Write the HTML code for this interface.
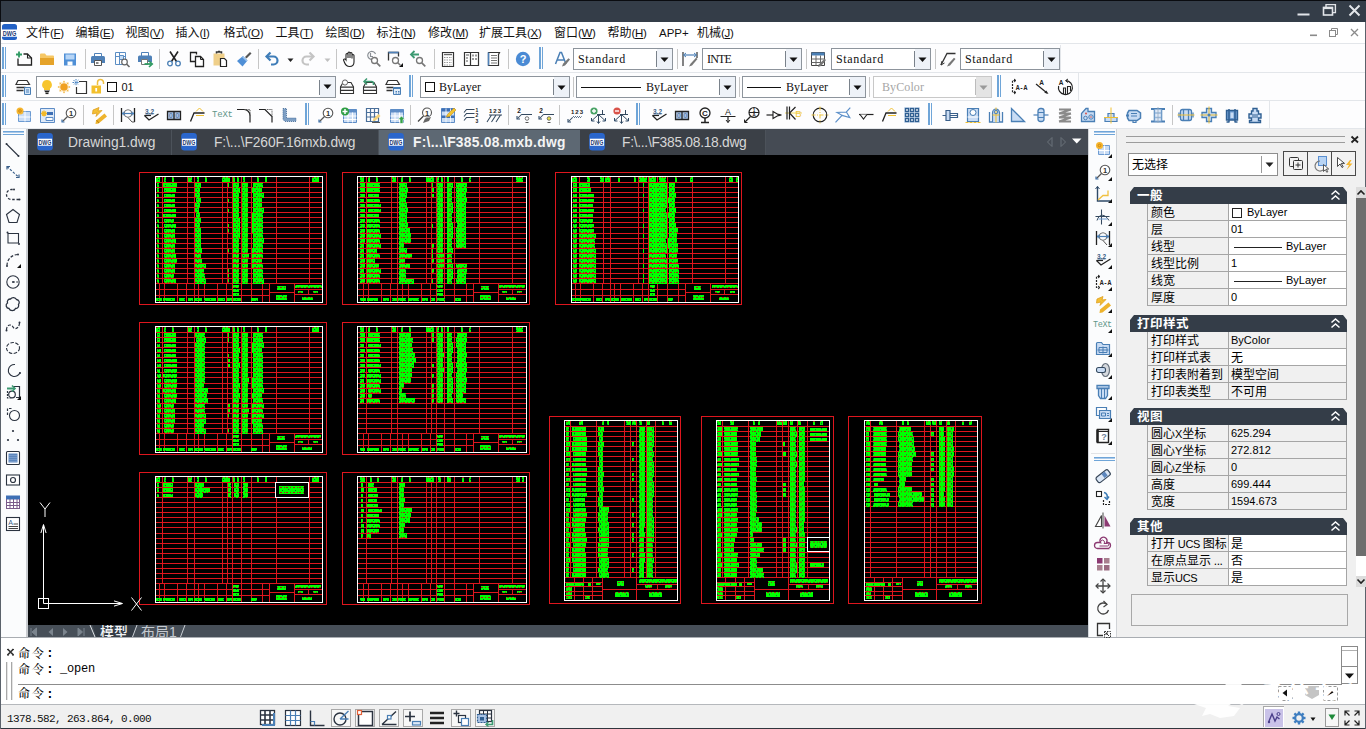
<!DOCTYPE html><html lang="zh"><head><meta charset="utf-8"><title>CAD</title><style>
*{box-sizing:border-box;margin:0;padding:0}
html,body{width:1366px;height:729px;overflow:hidden;background:#fff}
body{position:relative;font-family:"Liberation Sans","Noto Sans CJK SC",sans-serif;font-size:12px;color:#000}
.a{position:absolute}
.t{position:absolute;white-space:nowrap;line-height:1}
.mono{font-family:"Liberation Mono","Noto Sans CJK SC",monospace}
.serif{font-family:"Liberation Serif","Noto Serif CJK SC",serif}
svg{position:absolute;overflow:visible}
</style></head><body>
<div class="a" style="left:0px;top:0px;width:1366px;height:22px;background:#343d48;"></div>
<div class="a" style="left:0px;top:0px;width:1366px;height:1px;background:#0a0c10;"></div>
<div class="a" style="left:0px;top:0px;width:1px;height:22px;background:#0a0c10;"></div>
<div class="a" style="left:0px;top:22px;width:1366px;height:22px;background:#ffffff;"></div>
<div class="a" style="left:0px;top:44px;width:1366px;height:85px;background:#fdfdfe;"></div>
<div class="a" style="left:0px;top:43px;width:1366px;height:1px;background:#e3e6ea;"></div>
<div class="a" style="left:0px;top:72px;width:1366px;height:1px;background:#e3e6ea;"></div>
<div class="a" style="left:0px;top:100px;width:1366px;height:1px;background:#e3e6ea;"></div>
<div class="a" style="left:0px;top:128px;width:1366px;height:1px;background:#e3e6ea;"></div>
<div class="a" style="left:0px;top:129px;width:28px;height:509px;background:#fbfcfd;"></div>
<div class="a" style="left:26px;top:129px;width:2px;height:509px;background:#c9ccd0;"></div>
<div class="a" style="left:28px;top:129px;width:1061px;height:26px;background:#454b54;"></div>
<div class="a" style="left:28px;top:154.5px;width:1061px;height:1px;background:#8a8f95;"></div>
<div class="a" style="left:28px;top:155px;width:1060px;height:470px;background:#000;"></div>
<div class="a" style="left:28px;top:625px;width:1060px;height:12px;background:#474f58;"></div>
<div class="a" style="left:1089px;top:129px;width:28px;height:509px;background:#fbfcfd;"></div>
<div class="a" style="left:1088px;top:129px;width:1px;height:509px;background:#d5d8dc;"></div>
<div class="a" style="left:1117px;top:129px;width:249px;height:509px;background:#f0f0f0;"></div>
<div class="a" style="left:1116px;top:129px;width:1px;height:509px;background:#d0d3d7;"></div>
<div class="a" style="left:0px;top:637px;width:1366px;height:1px;background:#a9adb2;"></div>
<div class="a" style="left:0px;top:638px;width:1366px;height:67px;background:#ffffff;"></div>
<div class="a" style="left:0px;top:704px;width:1366px;height:1px;background:#b5b8bc;"></div>
<div class="a" style="left:0px;top:705px;width:1366px;height:24px;background:#f0f0f0;"></div>
<div class="a" style="left:0px;top:727.5px;width:1366px;height:1.5px;background:#30363e;"></div>
<div class="a" style="left:0px;top:22px;width:1px;height:707px;background:#5b626b;"></div>
<div class="a" style="left:1365px;top:22px;width:1px;height:707px;background:#5b626b;"></div>
<svg style="left:1290px;top:2px" width="76" height="20" viewBox="0 0 76 20">
<rect x="7.5" y="11.5" width="12" height="2" fill="#e2e5e9"/>
<rect x="33.5" y="5.500" width="9" height="7.500" fill="none" stroke="#e2e5e9" stroke-width="1.600"/><path d="M33 6h10" stroke="#e2e5e9" stroke-width="2.200"/>
<path d="M36 5V2.6h9.4v8H42.5" fill="none" stroke="#e2e5e9" stroke-width="1.4"/>
<path d="M59.5 3.5l10 10M69.5 3.5l-10 10" stroke="#e2e5e9" stroke-width="2"/>
</svg>
<svg style="left:1300px;top:24px" width="66" height="18" viewBox="0 0 66 18">
<rect x="10" y="10.5" width="7" height="1.6" fill="#8a8a8a"/>
<rect x="29.5" y="6.5" width="6" height="6" fill="none" stroke="#8a8a8a" stroke-width="1"/>
<path d="M31.5 6.5V4.5h6v6h-2" fill="none" stroke="#8a8a8a" stroke-width="1"/>
<path d="M51 5l7 7M58 5l-7 7" stroke="#8a8a8a" stroke-width="1.3"/>
</svg>
<svg style="left:2px;top:24px" width="15" height="16" viewBox="0 0 15 16">
<path d="M0 5.500V2.500A2.500 2.500 0 0 1 2.500 0h10A2.500 2.500 0 0 1 15 2.500v3z" fill="#2362c6"/>
<path d="M0 12.800h15v.7A2.500 2.500 0 0 1 12.500 16h-10A2.500 2.500 0 0 1 0 13.500z" fill="#2362c6"/>
<text x="7.500" y="11.800" font-family="Liberation Sans,sans-serif" font-size="7.400" font-weight="700" fill="#1b3770" text-anchor="middle" textLength="13.500" lengthAdjust="spacingAndGlyphs">DWG</text>
</svg>
<div class="t " style="left:26px;top:27px;font-size:12px;color:#111;">文件<span style="font-size:11.5px;letter-spacing:-0.3px">(<u>F</u>)</span></div>
<div class="t " style="left:75.5px;top:27px;font-size:12px;color:#111;">编辑<span style="font-size:11.5px;letter-spacing:-0.3px">(<u>E</u>)</span></div>
<div class="t " style="left:125.5px;top:27px;font-size:12px;color:#111;">视图<span style="font-size:11.5px;letter-spacing:-0.3px">(<u>V</u>)</span></div>
<div class="t " style="left:175.5px;top:27px;font-size:12px;color:#111;">插入<span style="font-size:11.5px;letter-spacing:-0.3px">(<u>I</u>)</span></div>
<div class="t " style="left:223.5px;top:27px;font-size:12px;color:#111;">格式<span style="font-size:11.5px;letter-spacing:-0.3px">(<u>O</u>)</span></div>
<div class="t " style="left:275.5px;top:27px;font-size:12px;color:#111;">工具<span style="font-size:11.5px;letter-spacing:-0.3px">(<u>T</u>)</span></div>
<div class="t " style="left:325.5px;top:27px;font-size:12px;color:#111;">绘图<span style="font-size:11.5px;letter-spacing:-0.3px">(<u>D</u>)</span></div>
<div class="t " style="left:376.5px;top:27px;font-size:12px;color:#111;">标注<span style="font-size:11.5px;letter-spacing:-0.3px">(<u>N</u>)</span></div>
<div class="t " style="left:428px;top:27px;font-size:12px;color:#111;">修改<span style="font-size:11.5px;letter-spacing:-0.3px">(<u>M</u>)</span></div>
<div class="t " style="left:479px;top:27px;font-size:12px;color:#111;">扩展工具<span style="font-size:11.5px;letter-spacing:-0.3px">(<u>X</u>)</span></div>
<div class="t " style="left:554px;top:27px;font-size:12px;color:#111;">窗口<span style="font-size:11.5px;letter-spacing:-0.3px">(<u>W</u>)</span></div>
<div class="t " style="left:607.5px;top:27px;font-size:12px;color:#111;">帮助<span style="font-size:11.5px;letter-spacing:-0.3px">(<u>H</u>)</span></div>
<div class="t " style="left:659px;top:27.5px;font-size:11.5px;color:#111;">APP+</div>
<div class="t " style="left:697px;top:27px;font-size:12px;color:#111;">机械<span style="font-size:11.5px;letter-spacing:-0.3px">(<u>J</u>)</span></div>
<div class="a" style="left:28px;top:130px;width:144px;height:25px;background:#3b4047;"></div>
<div class="a" style="left:171px;top:130px;width:1px;height:25px;background:#4c525a;"></div>
<svg style="left:37px;top:132.5px" width="16" height="17.5" viewBox="0 0 17 19">
<rect x="0" y="0" width="17" height="19" rx="3.500" fill="#2a66cc"/>
<rect x="0.800" y="6.200" width="15.400" height="7.600" fill="#fff"/>
<text x="8.500" y="12.900" font-family="Liberation Sans,sans-serif" font-size="7.600" font-weight="700" fill="#1b3770" text-anchor="middle" textLength="14" lengthAdjust="spacingAndGlyphs">DWG</text>
</svg>
<div class="t " style="left:68px;top:136px;font-size:13.8px;color:#d6d6d6;font-weight:400;letter-spacing:0px">Drawing1.dwg</div>
<div class="a" style="left:172px;top:130px;width:207px;height:25px;background:#3b4047;"></div>
<div class="a" style="left:378px;top:130px;width:1px;height:25px;background:#4c525a;"></div>
<svg style="left:181px;top:132.5px" width="16" height="17.5" viewBox="0 0 17 19">
<rect x="0" y="0" width="17" height="19" rx="3.500" fill="#2a66cc"/>
<rect x="0.800" y="6.200" width="15.400" height="7.600" fill="#fff"/>
<text x="8.500" y="12.900" font-family="Liberation Sans,sans-serif" font-size="7.600" font-weight="700" fill="#1b3770" text-anchor="middle" textLength="14" lengthAdjust="spacingAndGlyphs">DWG</text>
</svg>
<div class="t " style="left:214px;top:136px;font-size:13.8px;color:#d6d6d6;font-weight:400;letter-spacing:-0.13px">F:\...\F260F.16mxb.dwg</div>
<div class="a" style="left:379px;top:130px;width:201px;height:25px;background:#5d6873;"></div>
<svg style="left:388px;top:132.5px" width="16" height="17.5" viewBox="0 0 17 19">
<rect x="0" y="0" width="17" height="19" rx="3.500" fill="#2a66cc"/>
<rect x="0.800" y="6.200" width="15.400" height="7.600" fill="#fff"/>
<text x="8.500" y="12.900" font-family="Liberation Sans,sans-serif" font-size="7.600" font-weight="700" fill="#1b3770" text-anchor="middle" textLength="14" lengthAdjust="spacingAndGlyphs">DWG</text>
</svg>
<div class="t " style="left:413px;top:136px;font-size:13.8px;color:#f4f4f4;font-weight:700;letter-spacing:0.28px">F:\...\F385.08.mxb.dwg</div>
<div class="a" style="left:580px;top:130px;width:186px;height:25px;background:#3b4047;"></div>
<div class="a" style="left:765px;top:130px;width:1px;height:25px;background:#4c525a;"></div>
<svg style="left:589px;top:132.5px" width="16" height="17.5" viewBox="0 0 17 19">
<rect x="0" y="0" width="17" height="19" rx="3.500" fill="#2a66cc"/>
<rect x="0.800" y="6.200" width="15.400" height="7.600" fill="#fff"/>
<text x="8.500" y="12.900" font-family="Liberation Sans,sans-serif" font-size="7.600" font-weight="700" fill="#1b3770" text-anchor="middle" textLength="14" lengthAdjust="spacingAndGlyphs">DWG</text>
</svg>
<div class="t " style="left:622px;top:136px;font-size:13.8px;color:#d6d6d6;font-weight:400;letter-spacing:-0.28px">F:\...\F385.08.18.dwg</div>
<svg style="left:1040px;top:134px" width="48" height="16" viewBox="0 0 48 16">
<path d="M12 3.5L7.5 8 12 12.5z" fill="none" stroke="#6b727a" stroke-width="1"/>
<path d="M21 3.5L25.5 8 21 12.5z" fill="none" stroke="#6b727a" stroke-width="1"/>
<path d="M32 4.5h9.5L36.75 9.6z" fill="#fff"/>
</svg>
<svg style="left:0;top:0" width="1366" height="729" viewBox="0 0 1366 729" shape-rendering="crispEdges"><path d="M162.5 176.5V283.5M187.5 176.5V283.5M194.5 176.5V283.5M222.5 176.5V283.5M227.5 176.5V283.5M232.5 176.5V283.5M241.5 176.5V283.5M251.5 176.5V283.5M276.5 176.5V283.5M309.5 176.5V283.5M155.5 182.5H322.5M155.5 187.5H322.5M155.5 192.5H322.5M155.5 197.5H322.5M155.5 202.5H322.5M155.5 207.5H322.5M155.5 212.5H322.5M155.5 217.5H322.5M155.5 222.5H322.5M155.5 227.5H322.5M155.5 233.5H322.5M155.5 238.5H322.5M155.5 243.5H322.5M155.5 248.5H322.5M155.5 253.5H322.5M155.5 258.5H322.5M155.5 263.5H322.5M155.5 268.5H322.5M155.5 273.5H322.5M155.5 278.5H322.5M155.5 283.5H322.5M159.5 283.5V302.5M164.5 283.5V302.5M177.5 283.5V302.5M186.5 283.5V302.5M194.5 283.5V302.5M198.5 283.5V302.5M204.5 283.5V302.5M217.5 283.5V302.5M226.5 283.5V302.5M232.5 283.5V302.5M241.5 283.5V302.5M251.5 283.5V302.5M262.5 283.5V302.5M155.5 289.5H269.5M155.5 295.5H269.5M269.5 283.5V302.5M294.5 283.5V302.5M269.5 292.5H294.5M294.5 289.5H322.5M294.5 294.5H322.5M308.5 289.5V294.5M366.5 176.5V283.5M391.5 176.5V283.5M397.5 176.5V283.5M426.5 176.5V283.5M431.5 176.5V283.5M436.5 176.5V283.5M444.5 176.5V283.5M454.5 176.5V283.5M479.5 176.5V283.5M512.5 176.5V283.5M357.5 182.5H526.5M357.5 187.5H526.5M357.5 192.5H526.5M357.5 197.5H526.5M357.5 202.5H526.5M357.5 207.5H526.5M357.5 212.5H526.5M357.5 217.5H526.5M357.5 222.5H526.5M357.5 227.5H526.5M357.5 233.5H526.5M357.5 238.5H526.5M357.5 243.5H526.5M357.5 248.5H526.5M357.5 253.5H526.5M357.5 258.5H526.5M357.5 263.5H526.5M357.5 268.5H526.5M357.5 273.5H526.5M357.5 278.5H526.5M357.5 283.5H526.5M363.5 283.5V302.5M368.5 283.5V302.5M381.5 283.5V302.5M390.5 283.5V302.5M397.5 283.5V302.5M402.5 283.5V302.5M408.5 283.5V302.5M421.5 283.5V302.5M430.5 283.5V302.5M436.5 283.5V302.5M444.5 283.5V302.5M454.5 283.5V302.5M466.5 283.5V302.5M357.5 289.5H473.5M357.5 295.5H473.5M473.5 283.5V302.5M498.5 283.5V302.5M473.5 292.5H498.5M498.5 289.5H526.5M498.5 294.5H526.5M512.5 289.5V294.5M579.5 176.5V283.5M603.5 176.5V283.5M610.5 176.5V283.5M638.5 176.5V283.5M643.5 176.5V283.5M648.5 176.5V283.5M657.5 176.5V283.5M667.5 176.5V283.5M692.5 176.5V283.5M725.5 176.5V283.5M571.5 182.5H738.5M571.5 187.5H738.5M571.5 192.5H738.5M571.5 197.5H738.5M571.5 202.5H738.5M571.5 207.5H738.5M571.5 212.5H738.5M571.5 217.5H738.5M571.5 222.5H738.5M571.5 227.5H738.5M571.5 233.5H738.5M571.5 238.5H738.5M571.5 243.5H738.5M571.5 248.5H738.5M571.5 253.5H738.5M571.5 258.5H738.5M571.5 263.5H738.5M571.5 268.5H738.5M571.5 273.5H738.5M571.5 278.5H738.5M571.5 283.5H738.5M575.5 283.5V302.5M580.5 283.5V302.5M593.5 283.5V302.5M602.5 283.5V302.5M610.5 283.5V302.5M614.5 283.5V302.5M620.5 283.5V302.5M633.5 283.5V302.5M642.5 283.5V302.5M648.5 283.5V302.5M657.5 283.5V302.5M667.5 283.5V302.5M678.5 283.5V302.5M571.5 289.5H685.5M571.5 295.5H685.5M685.5 283.5V302.5M710.5 283.5V302.5M685.5 292.5H710.5M710.5 289.5H738.5M710.5 294.5H738.5M724.5 289.5V294.5M162.5 326.5V433.5M187.5 326.5V433.5M194.5 326.5V433.5M222.5 326.5V433.5M227.5 326.5V433.5M232.5 326.5V433.5M241.5 326.5V433.5M251.5 326.5V433.5M276.5 326.5V433.5M309.5 326.5V433.5M155.5 332.5H322.5M155.5 337.5H322.5M155.5 342.5H322.5M155.5 347.5H322.5M155.5 352.5H322.5M155.5 357.5H322.5M155.5 362.5H322.5M155.5 367.5H322.5M155.5 372.5H322.5M155.5 377.5H322.5M155.5 383.5H322.5M155.5 388.5H322.5M155.5 393.5H322.5M155.5 398.5H322.5M155.5 403.5H322.5M155.5 408.5H322.5M155.5 413.5H322.5M155.5 418.5H322.5M155.5 423.5H322.5M155.5 428.5H322.5M155.5 433.5H322.5M159.5 433.5V452.5M164.5 433.5V452.5M177.5 433.5V452.5M186.5 433.5V452.5M194.5 433.5V452.5M198.5 433.5V452.5M204.5 433.5V452.5M217.5 433.5V452.5M226.5 433.5V452.5M232.5 433.5V452.5M241.5 433.5V452.5M251.5 433.5V452.5M262.5 433.5V452.5M155.5 439.5H269.5M155.5 445.5H269.5M269.5 433.5V452.5M294.5 433.5V452.5M269.5 442.5H294.5M294.5 439.5H322.5M294.5 444.5H322.5M308.5 439.5V444.5M366.5 326.5V433.5M391.5 326.5V433.5M397.5 326.5V433.5M426.5 326.5V433.5M431.5 326.5V433.5M436.5 326.5V433.5M444.5 326.5V433.5M454.5 326.5V433.5M479.5 326.5V433.5M512.5 326.5V433.5M357.5 332.5H526.5M357.5 337.5H526.5M357.5 342.5H526.5M357.5 347.5H526.5M357.5 352.5H526.5M357.5 357.5H526.5M357.5 362.5H526.5M357.5 367.5H526.5M357.5 372.5H526.5M357.5 377.5H526.5M357.5 383.5H526.5M357.5 388.5H526.5M357.5 393.5H526.5M357.5 398.5H526.5M357.5 403.5H526.5M357.5 408.5H526.5M357.5 413.5H526.5M357.5 418.5H526.5M357.5 423.5H526.5M357.5 428.5H526.5M357.5 433.5H526.5M363.5 433.5V452.5M368.5 433.5V452.5M381.5 433.5V452.5M390.5 433.5V452.5M397.5 433.5V452.5M402.5 433.5V452.5M408.5 433.5V452.5M421.5 433.5V452.5M430.5 433.5V452.5M436.5 433.5V452.5M444.5 433.5V452.5M454.5 433.5V452.5M466.5 433.5V452.5M357.5 439.5H473.5M357.5 445.5H473.5M473.5 433.5V452.5M498.5 433.5V452.5M473.5 442.5H498.5M498.5 439.5H526.5M498.5 444.5H526.5M512.5 439.5V444.5M162.5 476.5V583.5M187.5 476.5V583.5M194.5 476.5V583.5M222.5 476.5V583.5M227.5 476.5V583.5M232.5 476.5V583.5M241.5 476.5V583.5M251.5 476.5V583.5M276.5 476.5V583.5M309.5 476.5V583.5M155.5 482.5H322.5M155.5 487.5H322.5M155.5 492.5H322.5M155.5 497.5H322.5M155.5 502.5H322.5M155.5 507.5H322.5M155.5 512.5H322.5M155.5 517.5H322.5M155.5 522.5H322.5M155.5 527.5H322.5M155.5 533.5H322.5M155.5 538.5H322.5M155.5 543.5H322.5M155.5 548.5H322.5M155.5 553.5H322.5M155.5 558.5H322.5M155.5 563.5H322.5M155.5 568.5H322.5M155.5 573.5H322.5M155.5 578.5H322.5M155.5 583.5H322.5M159.5 583.5V602.5M164.5 583.5V602.5M177.5 583.5V602.5M186.5 583.5V602.5M194.5 583.5V602.5M198.5 583.5V602.5M204.5 583.5V602.5M217.5 583.5V602.5M226.5 583.5V602.5M232.5 583.5V602.5M241.5 583.5V602.5M251.5 583.5V602.5M262.5 583.5V602.5M155.5 589.5H269.5M155.5 595.5H269.5M269.5 583.5V602.5M294.5 583.5V602.5M269.5 592.5H294.5M294.5 589.5H322.5M294.5 594.5H322.5M308.5 589.5V594.5M366.5 476.5V583.5M391.5 476.5V583.5M397.5 476.5V583.5M426.5 476.5V583.5M431.5 476.5V583.5M436.5 476.5V583.5M444.5 476.5V583.5M454.5 476.5V583.5M479.5 476.5V583.5M512.5 476.5V583.5M357.5 482.5H526.5M357.5 487.5H526.5M357.5 492.5H526.5M357.5 497.5H526.5M357.5 502.5H526.5M357.5 507.5H526.5M357.5 512.5H526.5M357.5 517.5H526.5M357.5 522.5H526.5M357.5 527.5H526.5M357.5 533.5H526.5M357.5 538.5H526.5M357.5 543.5H526.5M357.5 548.5H526.5M357.5 553.5H526.5M357.5 558.5H526.5M357.5 563.5H526.5M357.5 568.5H526.5M357.5 573.5H526.5M357.5 578.5H526.5M357.5 583.5H526.5M363.5 583.5V602.5M368.5 583.5V602.5M381.5 583.5V602.5M390.5 583.5V602.5M397.5 583.5V602.5M402.5 583.5V602.5M408.5 583.5V602.5M421.5 583.5V602.5M430.5 583.5V602.5M436.5 583.5V602.5M444.5 583.5V602.5M454.5 583.5V602.5M466.5 583.5V602.5M357.5 589.5H473.5M357.5 595.5H473.5M473.5 583.5V602.5M498.5 583.5V602.5M473.5 592.5H498.5M498.5 589.5H526.5M498.5 594.5H526.5M512.5 589.5V594.5M570.5 420.5V577.5M596.5 420.5V577.5M624.5 420.5V577.5M630.5 420.5V577.5M636.5 420.5V577.5M646.5 420.5V577.5M655.5 420.5V577.5M564.5 426.5H677.5M564.5 431.5H677.5M564.5 436.5H677.5M564.5 441.5H677.5M564.5 446.5H677.5M564.5 451.5H677.5M564.5 456.5H677.5M564.5 461.5H677.5M564.5 466.5H677.5M564.5 471.5H677.5M564.5 476.5H677.5M564.5 481.5H677.5M564.5 486.5H677.5M564.5 491.5H677.5M564.5 496.5H677.5M564.5 501.5H677.5M564.5 506.5H677.5M564.5 512.5H677.5M564.5 517.5H677.5M564.5 522.5H677.5M564.5 527.5H677.5M564.5 532.5H677.5M564.5 537.5H677.5M564.5 542.5H677.5M564.5 547.5H677.5M564.5 552.5H677.5M564.5 557.5H677.5M564.5 562.5H677.5M564.5 567.5H677.5M564.5 572.5H677.5M564.5 577.5H677.5M574.5 577.5V600.5M583.5 577.5V600.5M592.5 577.5V600.5M564.5 586.5H602.5M564.5 591.5H602.5M564.5 595.5H602.5M564.5 582.5H602.5M602.5 577.5V600.5M636.5 577.5V600.5M602.5 589.5H677.5M636.5 584.5H677.5M657.5 584.5V589.5M722.5 420.5V577.5M748.5 420.5V577.5M776.5 420.5V577.5M782.5 420.5V577.5M788.5 420.5V577.5M797.5 420.5V577.5M807.5 420.5V577.5M716.5 426.5H829.5M716.5 431.5H829.5M716.5 436.5H829.5M716.5 441.5H829.5M716.5 446.5H829.5M716.5 451.5H829.5M716.5 456.5H829.5M716.5 461.5H829.5M716.5 466.5H829.5M716.5 471.5H829.5M716.5 476.5H829.5M716.5 481.5H829.5M716.5 486.5H829.5M716.5 491.5H829.5M716.5 496.5H829.5M716.5 501.5H829.5M716.5 506.5H829.5M716.5 512.5H829.5M716.5 517.5H829.5M716.5 522.5H829.5M716.5 527.5H829.5M716.5 532.5H829.5M716.5 537.5H829.5M716.5 542.5H829.5M716.5 547.5H829.5M716.5 552.5H829.5M716.5 557.5H829.5M716.5 562.5H829.5M716.5 567.5H829.5M716.5 572.5H829.5M716.5 577.5H829.5M725.5 577.5V600.5M735.5 577.5V600.5M744.5 577.5V600.5M716.5 586.5H754.5M716.5 591.5H754.5M716.5 595.5H754.5M716.5 582.5H754.5M754.5 577.5V600.5M788.5 577.5V600.5M754.5 589.5H829.5M788.5 584.5H829.5M808.5 584.5V589.5M870.5 420.5V577.5M896.5 420.5V577.5M924.5 420.5V577.5M930.5 420.5V577.5M936.5 420.5V577.5M946.5 420.5V577.5M955.5 420.5V577.5M864.5 426.5H977.5M864.5 431.5H977.5M864.5 436.5H977.5M864.5 441.5H977.5M864.5 446.5H977.5M864.5 451.5H977.5M864.5 456.5H977.5M864.5 461.5H977.5M864.5 466.5H977.5M864.5 471.5H977.5M864.5 476.5H977.5M864.5 481.5H977.5M864.5 486.5H977.5M864.5 491.5H977.5M864.5 496.5H977.5M864.5 501.5H977.5M864.5 506.5H977.5M864.5 512.5H977.5M864.5 517.5H977.5M864.5 522.5H977.5M864.5 527.5H977.5M864.5 532.5H977.5M864.5 537.5H977.5M864.5 542.5H977.5M864.5 547.5H977.5M864.5 552.5H977.5M864.5 557.5H977.5M864.5 562.5H977.5M864.5 567.5H977.5M864.5 572.5H977.5M864.5 577.5H977.5M874.5 577.5V600.5M883.5 577.5V600.5M892.5 577.5V600.5M864.5 586.5H902.5M864.5 591.5H902.5M864.5 595.5H902.5M864.5 582.5H902.5M902.5 577.5V600.5M936.5 577.5V600.5M902.5 589.5H977.5M936.5 584.5H977.5M957.5 584.5V589.5" stroke="#de161e" stroke-width="1" fill="none"/><path d="M275.7 482.7h32.6v14.5h-32.6zM807.4 537.6h22.4v14.2h-22.4z" fill="#000"/><defs><pattern id="tx" width="13" height="5" shape-rendering="crispEdges" patternUnits="userSpaceOnUse" patternTransform="translate(0,182)"><g id="txc"><path d="M0 0h2v1h-2zM4 0h1v1h-1zM7 0h2v1h-2zM11 0h1v1h-1z" fill="#b01818"/><path d="M2 2h1v1h-1zM9 3h1v1h-1z" fill="#063"/></g></pattern><pattern id="tx2" width="13" height="5.03" patternUnits="userSpaceOnUse" patternTransform="translate(0,426)"><use href="#txc"/></pattern><path id="gp" d="M156.6 183.4h2.3v3.8h-2.3zM156.6 188.4h2.1v3.8h-2.1zM156.6 193.5h2.5v3.8h-2.5zM156.6 198.5h2.1v3.8h-2.1zM156.6 203.6h2.4v3.8h-2.4zM156.6 208.6h2.3v3.8h-2.3zM156.6 213.6h2v3.8h-2zM156.6 218.7h2.4v3.8h-2.4zM156.6 223.7h2v3.8h-2zM156.6 228.8h2.3v3.8h-2.3zM156.6 233.8h2.1v3.8h-2.1zM156.6 238.8h2.1v3.8h-2.1zM156.6 243.9h2.3v3.8h-2.3zM156.6 248.9h2.7v3.8h-2.7zM156.6 254h2.1v3.8h-2.1zM156.6 259h2.2v3.8h-2.2zM156.6 264h2.5v3.8h-2.5zM156.6 269.1h2.8v3.8h-2.8zM156.6 274.1h2.5v3.8h-2.5zM156.6 279.2h2.3v3.8h-2.3zM163.4 183.4h13.1v3.8h-13.1zM163.6 188.4h12.7v3.8h-12.7zM163.5 193.5h11.1v3.8h-11.1zM163.9 198.5h11.1v3.8h-11.1zM163.7 203.6h10.9v3.8h-10.9zM163.6 208.6h12.1v3.8h-12.1zM163.4 213.6h12.1v3.8h-12.1zM163.5 218.7h10.8v3.8h-10.8zM163.7 223.7h12.2v3.8h-12.2zM163.8 228.8h11.2v3.8h-11.2zM163.6 233.8h11.7v3.8h-11.7zM163.8 238.8h12.3v3.8h-12.3zM163.7 243.9h11v3.8h-11zM163.9 248.9h11.5v3.8h-11.5zM163.6 254h12.4v3.8h-12.4zM163.5 259h13.1v3.8h-13.1zM163.9 264h11.3v3.8h-11.3zM163.7 269.1h10.9v3.8h-10.9zM163.8 274.1h10.5v3.8h-10.5zM163.7 279.2h12.3v3.8h-12.3zM195.1 182.9h5.6v4.9h-5.6zM195.3 187.9h5v4.9h-5zM195.2 193h4.9v4.9h-4.9zM195.5 198h5.1v4.9h-5.1zM195.3 203.1h4.5v4.9h-4.5zM195.3 208.1h3.7v4.9h-3.7zM195.5 213.1h4.7v4.9h-4.7zM195.1 218.2h5.5v4.9h-5.5zM195.3 223.2h4.4v4.9h-4.4zM195.2 228.3h5.8v4.9h-5.8zM195 233.3h6.3v4.9h-6.3zM195.4 238.3h5.7v4.9h-5.7zM195 243.4h6.1v4.9h-6.1zM195.4 248.4h6.3v4.9h-6.3zM195.2 253.5h5.9v4.9h-5.9zM195.4 258.5h6.6v4.9h-6.6zM195.4 263.5h10.1v4.9h-10.1zM195.1 268.6h9.3v4.9h-9.3zM195.4 273.6h9.2v4.9h-9.2zM195 278.7h10.8v4.9h-10.8zM228 183.4h1.3v3.8h-1.3zM228 198.5h1.3v3.8h-1.3zM228 208.6h1.3v3.8h-1.3zM228 223.7h1.4v3.8h-1.4zM228 228.8h1.4v3.8h-1.4zM228 248.9h1.3v3.8h-1.3zM228 269.1h1.2v3.8h-1.2zM228 274.1h1.4v3.8h-1.4zM228 279.2h1.3v3.8h-1.3zM233.2 182.9h6.1v4.9h-6.1zM233.2 187.9h6.5v4.9h-6.5zM233.2 193h6.2v4.9h-6.2zM233.2 198h6v4.9h-6zM233.2 203.1h6.1v4.9h-6.1zM233.2 208.1h6.2v4.9h-6.2zM233.2 213.1h5.6v4.9h-5.6zM233.2 218.2h6.4v4.9h-6.4zM233.2 223.2h6.3v4.9h-6.3zM233.2 228.3h6.4v4.9h-6.4zM233.2 233.3h6.3v4.9h-6.3zM233.2 238.3h5.9v4.9h-5.9zM233.2 243.4h5.9v4.9h-5.9zM233.2 248.4h5.6v4.9h-5.6zM233.2 253.5h6.1v4.9h-6.1zM233.2 258.5h5.6v4.9h-5.6zM233.2 263.5h5.6v4.9h-5.6zM233.2 268.6h5.7v4.9h-5.7zM233.2 273.6h5.7v4.9h-5.7zM233.2 278.7h5.8v4.9h-5.8zM242.4 182.9h5.2v4.9h-5.2zM242.4 187.9h5.1v4.9h-5.1zM242.4 193h5.3v4.9h-5.3zM242.4 198h5.2v4.9h-5.2zM242.4 203.1h5.5v4.9h-5.5zM242.4 208.1h5.1v4.9h-5.1zM242.4 213.1h6v4.9h-6zM242.4 218.2h5.7v4.9h-5.7zM242.4 223.2h5.2v4.9h-5.2zM242.4 228.3h5.4v4.9h-5.4zM242.4 233.3h5.4v4.9h-5.4zM242.4 238.3h5.5v4.9h-5.5zM242.4 243.4h5.2v4.9h-5.2zM242.4 248.4h5.9v4.9h-5.9zM242.4 253.5h6.1v4.9h-6.1zM242.4 258.5h5.6v4.9h-5.6zM242.4 263.5h5.6v4.9h-5.6zM242.4 268.6h5.2v4.9h-5.2zM242.4 273.6h5.2v4.9h-5.2zM242.4 278.7h5.4v4.9h-5.4zM252.7 182.9h9.9v4.9h-9.9zM252.2 187.9h10.2v4.9h-10.2zM252.5 193h11v4.9h-11zM252.5 198h9.9v4.9h-9.9zM252.5 203.1h9.7v4.9h-9.7zM252.7 208.1h10.9v4.9h-10.9zM252.4 213.1h10.8v4.9h-10.8zM252.3 218.2h10.4v4.9h-10.4zM252.5 223.2h10.8v4.9h-10.8zM252.4 228.3h10.9v4.9h-10.9zM252.7 233.3h9.8v4.9h-9.8zM252.7 238.3h10.9v4.9h-10.9zM252.7 243.4h10.6v4.9h-10.6zM252.3 248.4h10.9v4.9h-10.9zM252.4 253.5h10.5v4.9h-10.5zM252.2 258.5h10v4.9h-10zM252.4 263.5h10.2v4.9h-10.2zM252.8 268.6h10.4v4.9h-10.4zM252.8 273.6h10.1v4.9h-10.1zM252.8 278.7h10.8v4.9h-10.8zM156.4 177.1h4v4.6h-4zM164.4 177.1h2v4.6h-2zM172.4 177.1h2v4.6h-2zM188.4 177.1h4v4.6h-4zM197.4 177.1h2v4.6h-2zM205.4 177.1h2v4.6h-2zM222.4 177.1h8v4.6h-8zM233.4 177.1h2v4.6h-2zM237.4 177.1h2v4.6h-2zM243.4 177.1h2v4.6h-2zM257.4 177.1h2v4.6h-2zM265.4 177.1h2v4.6h-2zM312.4 177.1h7v4.6h-7zM155.9 297.8h5.9v3.4h-5.9zM162.9 297.8h11.8v3.4h-11.8zM179.4 297.8h5.8v3.4h-5.8zM188.4 297.8h4.8v3.4h-4.8zM194.4 297.8h7.8v3.4h-7.8zM204.4 297.8h11.1v3.4h-11.1zM218.4 297.8h6.2v3.4h-6.2zM227.4 297.8h4.2v3.4h-4.2zM232.9 297.8h8v3.4h-8zM251.4 297.8h6.1v3.4h-6.1zM233.4 284.6h5.5v3.2h-5.5zM233.4 288.8h5.5v3.2h-5.5zM233.4 293h5.5v3.2h-5.5zM277.4 285.9h8.2v4.5h-8.2zM276.4 294.9h10.8v5h-10.8zM295.4 284.9h26.1v3h-26.1zM298.4 290.7h5v2.6h-5zM313.4 290.7h5v2.6h-5zM302.4 296.6h10.2v3.6h-10.2zM360.2 183.4h4.6v3.8h-4.6zM360.2 188.4h4.6v3.8h-4.6zM360.2 193.5h4.4v3.8h-4.4zM360.2 198.5h4.1v3.8h-4.1zM360.2 203.6h4.6v3.8h-4.6zM360.2 208.6h4.3v3.8h-4.3zM360.2 213.6h4.6v3.8h-4.6zM360.2 218.7h4.8v3.8h-4.8zM360.2 223.7h4.3v3.8h-4.3zM360.2 228.8h4.3v3.8h-4.3zM360.2 233.8h4.8v3.8h-4.8zM360.2 238.8h4.6v3.8h-4.6zM360.2 243.9h4.1v3.8h-4.1zM360.2 248.9h4.1v3.8h-4.1zM360.2 254h4.1v3.8h-4.1zM360.2 259h4.7v3.8h-4.7zM360.2 264h4.6v3.8h-4.6zM360.2 269.1h4.1v3.8h-4.1zM360.2 274.1h4.7v3.8h-4.7zM360.2 279.2h4.8v3.8h-4.8zM367.2 183.4h13.2v3.8h-13.2zM367.1 188.4h13v3.8h-13zM367.6 193.5h11.3v3.8h-11.3zM367.3 198.5h13v3.8h-13zM367.3 203.6h13.8v3.8h-13.8zM367.5 208.6h13.4v3.8h-13.4zM367.2 213.6h12.2v3.8h-12.2zM367.1 218.7h12.4v3.8h-12.4zM367.2 223.7h13.1v3.8h-13.1zM367.1 228.8h12.7v3.8h-12.7zM367.2 233.8h13.8v3.8h-13.8zM367.4 238.8h12.5v3.8h-12.5zM367.3 243.9h13.7v3.8h-13.7zM367.3 248.9h9.7v3.8h-9.7zM367.3 254h12.8v3.8h-12.8zM367.3 259h7.6v3.8h-7.6zM367 264h12.2v3.8h-12.2zM367.1 269.1h13.6v3.8h-13.6zM367.4 274.1h12.5v3.8h-12.5zM367.2 279.2h12.9v3.8h-12.9zM398.8 182.9h8.2v4.9h-8.2zM398.6 187.9h9.2v4.9h-9.2zM398.6 193h8.5v4.9h-8.5zM399 198h7.4v4.9h-7.4zM398.8 203.1h8.2v4.9h-8.2zM399 208.1h8.7v4.9h-8.7zM398.9 213.1h8v4.9h-8zM398.8 218.2h8.2v4.9h-8.2zM398.8 223.2h8.8v4.9h-8.8zM398.8 228.3h11.3v4.9h-11.3zM398.9 233.3h12.3v4.9h-12.3zM399.1 238.3h12v4.9h-12zM398.8 243.4h5.5v4.9h-5.5zM399 248.4h8.2v4.9h-8.2zM398.6 253.5h13.4v4.9h-13.4zM398.5 258.5h6.3v4.9h-6.3zM398.5 263.5h11.7v4.9h-11.7zM399 268.6h6.5v4.9h-6.5zM398.6 273.6h7.5v4.9h-7.5zM398.9 278.7h14.7v4.9h-14.7zM431.6 183.4h1.7v3.8h-1.7zM431.6 188.4h2v3.8h-2zM431.6 193.5h2v3.8h-2zM431.6 223.7h1.7v3.8h-1.7zM431.6 243.9h2v3.8h-2zM431.6 248.9h1.8v3.8h-1.8zM431.6 254h1.8v3.8h-1.8zM431.6 259h2v3.8h-2zM431.6 269.1h1.9v3.8h-1.9zM431.6 279.2h1.7v3.8h-1.7zM437.4 182.9h5.7v4.9h-5.7zM437.4 187.9h5.8v4.9h-5.8zM437.4 193h5.6v4.9h-5.6zM437.4 198h5.5v4.9h-5.5zM437.4 203.1h5.6v4.9h-5.6zM437.4 208.1h6v4.9h-6zM437.4 213.1h5.3v4.9h-5.3zM437.4 218.2h5.9v4.9h-5.9zM437.4 223.2h5.7v4.9h-5.7zM437.4 228.3h5.3v4.9h-5.3zM437.4 233.3h5.6v4.9h-5.6zM437.4 238.3h5.9v4.9h-5.9zM437.4 243.4h5.8v4.9h-5.8zM437.4 248.4h5.4v4.9h-5.4zM437.4 253.5h6.3v4.9h-6.3zM437.4 258.5h6.1v4.9h-6.1zM437.4 263.5h6.3v4.9h-6.3zM437.4 268.6h5.4v4.9h-5.4zM437.4 273.6h5.6v4.9h-5.6zM437.4 278.7h5.3v4.9h-5.3zM446.5 182.9h6.3v4.9h-6.3zM446.5 187.9h5.8v4.9h-5.8zM446.5 193h5.6v4.9h-5.6zM446.5 198h5.9v4.9h-5.9zM446.5 203.1h6.4v4.9h-6.4zM446.5 208.1h6.3v4.9h-6.3zM446.5 213.1h5.8v4.9h-5.8zM446.5 218.2h5.6v4.9h-5.6zM446.5 223.2h6.4v4.9h-6.4zM446.5 228.3h6.1v4.9h-6.1zM446.5 233.3h6.2v4.9h-6.2zM446.5 238.3h5.6v4.9h-5.6zM446.5 243.4h5.6v4.9h-5.6zM446.5 248.4h6.2v4.9h-6.2zM446.5 253.5h5.9v4.9h-5.9zM446.5 258.5h5.6v4.9h-5.6zM446.5 263.5h6.4v4.9h-6.4zM446.5 268.6h6.1v4.9h-6.1zM446.5 273.6h6.3v4.9h-6.3zM446.5 278.7h5.6v4.9h-5.6zM456 182.9h11v4.9h-11zM456.3 187.9h10.8v4.9h-10.8zM456.3 193h9.9v4.9h-9.9zM456.2 198h11v4.9h-11zM456.3 203.1h9.6v4.9h-9.6zM456.1 208.1h10v4.9h-10zM456 213.1h9.9v4.9h-9.9zM456.2 218.2h9.8v4.9h-9.8zM456.5 223.2h9.7v4.9h-9.7zM456.3 228.3h9.9v4.9h-9.9zM456.2 233.3h9.8v4.9h-9.8zM456.2 238.3h9.6v4.9h-9.6zM456.4 243.4h9.3v4.9h-9.3zM456.1 263.5h10.5v4.9h-10.5zM456.6 268.6h9.9v4.9h-9.9zM456.5 273.6h9.4v4.9h-9.4zM456.3 278.7h10.1v4.9h-10.1zM360 177.1h4v4.6h-4zM368 177.1h2v4.6h-2zM376 177.1h2v4.6h-2zM392 177.1h4v4.6h-4zM401 177.1h2v4.6h-2zM409 177.1h2v4.6h-2zM426 177.1h8v4.6h-8zM437 177.1h2v4.6h-2zM441 177.1h2v4.6h-2zM447 177.1h2v4.6h-2zM461 177.1h2v4.6h-2zM469 177.1h2v4.6h-2zM516 177.1h7v4.6h-7zM359.5 297.8h6.2v3.4h-6.2zM366.5 297.8h11.9v3.4h-11.9zM383 297.8h6v3.4h-6zM392 297.8h5.1v3.4h-5.1zM398 297.8h8.3v3.4h-8.3zM408 297.8h10.9v3.4h-10.9zM422 297.8h6.2v3.4h-6.2zM431 297.8h4.1v3.4h-4.1zM436.5 297.8h8.1v3.4h-8.1zM455 297.8h5.9v3.4h-5.9zM437 284.6h5.5v3.2h-5.5zM437 288.8h5.5v3.2h-5.5zM437 293h5.5v3.2h-5.5zM481 285.9h7.9v4.5h-7.9zM480 294.9h10.7v5h-10.7zM499 284.9h25.8v3h-25.8zM502 290.7h5v2.6h-5zM517 290.7h5v2.6h-5zM506 296.6h9.7v3.6h-9.7zM572.5 183.4h4.6v3.8h-4.6zM572.5 188.4h4.2v3.8h-4.2zM572.5 193.5h4.1v3.8h-4.1zM572.5 198.5h4.1v3.8h-4.1zM572.5 203.6h4.7v3.8h-4.7zM572.5 208.6h4.7v3.8h-4.7zM572.5 213.6h4.5v3.8h-4.5zM572.5 218.7h4.2v3.8h-4.2zM572.5 223.7h4.2v3.8h-4.2zM572.5 228.8h4.2v3.8h-4.2zM572.5 233.8h4.4v3.8h-4.4zM572.5 238.8h4.1v3.8h-4.1zM572.5 243.9h4.4v3.8h-4.4zM572.5 248.9h4.2v3.8h-4.2zM572.5 254h4.8v3.8h-4.8zM572.5 259h4.8v3.8h-4.8zM572.5 264h4.4v3.8h-4.4zM572.5 269.1h4.2v3.8h-4.2zM572.5 274.1h4.8v3.8h-4.8zM572.5 279.2h4.2v3.8h-4.2zM578.7 183.4h11.7v3.8h-11.7zM579 188.4h11.5v3.8h-11.5zM578.8 193.5h14.9v3.8h-14.9zM578.7 198.5h15v3.8h-15zM578.8 203.6h14.5v3.8h-14.5zM578.7 208.6h14.8v3.8h-14.8zM578.9 213.6h13.9v3.8h-13.9zM579.1 218.7h14.1v3.8h-14.1zM579.2 223.7h14.6v3.8h-14.6zM579.1 228.8h14.9v3.8h-14.9zM578.9 233.8h17.5v3.8h-17.5zM579.3 238.8h16.1v3.8h-16.1zM579.1 243.9h15.9v3.8h-15.9zM578.7 248.9h17.3v3.8h-17.3zM579.2 254h17.1v3.8h-17.1zM579.1 259h16.8v3.8h-16.8zM578.8 264h17.5v3.8h-17.5zM579 269.1h16.7v3.8h-16.7zM579.2 274.1h17.2v3.8h-17.2zM579.1 279.2h17.3v3.8h-17.3zM642.7 183.4h1.6v3.8h-1.6zM642.7 193.5h1.5v3.8h-1.5zM642.7 208.6h1.5v3.8h-1.5zM642.7 223.7h1.3v3.8h-1.3zM642.7 233.8h1.2v3.8h-1.2zM642.7 248.9h1.3v3.8h-1.3zM642.7 264h1.3v3.8h-1.3zM642.7 274.1h1.2v3.8h-1.2zM642.7 279.2h1.5v3.8h-1.5zM648.7 182.9h18v4.9h-18zM648.7 187.9h18.1v4.9h-18.1zM648.7 193h18.1v4.9h-18.1zM648.7 198h18.1v4.9h-18.1zM648.7 203.1h18v4.9h-18zM648.7 208.1h17.6v4.9h-17.6zM648.7 213.1h18.2v4.9h-18.2zM648.7 218.2h18.2v4.9h-18.2zM648.7 223.2h18v4.9h-18zM648.7 228.3h18v4.9h-18zM648.7 233.3h18.1v4.9h-18.1zM648.7 238.3h17.7v4.9h-17.7zM648.7 243.4h18.2v4.9h-18.2zM648.7 248.4h17.8v4.9h-17.8zM648.7 253.5h17.7v4.9h-17.7zM648.7 258.5h17.8v4.9h-17.8zM648.7 263.5h18.2v4.9h-18.2zM648.7 268.6h17.8v4.9h-17.8zM648.7 273.6h18.2v4.9h-18.2zM648.7 278.7h18.4v4.9h-18.4zM668.5 182.9h6.7v4.9h-6.7zM668.7 187.9h6.5v4.9h-6.5zM668.7 193h7v4.9h-7zM668.3 198h7.1v4.9h-7.1zM668.5 203.1h6.2v4.9h-6.2zM668.5 208.1h7.1v4.9h-7.1zM668.3 213.1h7v4.9h-7zM668.5 218.2h6v4.9h-6zM668.7 223.2h6.8v4.9h-6.8zM668.5 228.3h9v4.9h-9zM668.6 233.3h8.6v4.9h-8.6zM668.4 238.3h8.8v4.9h-8.8zM668.4 243.4h9.4v4.9h-9.4zM668.9 248.4h9.1v4.9h-9.1zM668.6 253.5h7.9v4.9h-7.9zM668.9 258.5h8.8v4.9h-8.8zM668.5 263.5h10.7v4.9h-10.7zM668.9 268.6h9.9v4.9h-9.9zM668.6 273.6h10.1v4.9h-10.1zM668.6 278.7h10v4.9h-10zM572.2 177.1h5v4.6h-5zM586.7 177.1h3v4.6h-3zM599.7 177.1h4v4.6h-4zM604.7 177.1h5v4.6h-5zM617.7 177.1h2v4.6h-2zM633.7 177.1h2v4.6h-2zM638.7 177.1h8v4.6h-8zM648.7 177.1h7v4.6h-7zM658.7 177.1h7v4.6h-7zM674.7 177.1h2v4.6h-2zM689.7 177.1h3v4.6h-3zM728.7 177.1h4v4.6h-4zM735.7 177.1h2v4.6h-2zM572.2 297.8h6.3v3.4h-6.3zM579.2 297.8h11.8v3.4h-11.8zM595.7 297.8h6.2v3.4h-6.2zM604.7 297.8h5v3.4h-5zM610.7 297.8h8.2v3.4h-8.2zM620.7 297.8h11.1v3.4h-11.1zM634.7 297.8h5.8v3.4h-5.8zM643.7 297.8h4.2v3.4h-4.2zM649.2 297.8h8v3.4h-8zM667.7 297.8h5.7v3.4h-5.7zM649.7 284.6h5.5v3.2h-5.5zM649.7 288.8h5.5v3.2h-5.5zM649.7 293h5.5v3.2h-5.5zM693.7 285.9h7.7v4.5h-7.7zM692.7 294.9h11v5h-11zM711.7 284.9h26v3h-26zM714.7 290.7h5v2.6h-5zM729.7 290.7h5v2.6h-5zM718.7 296.6h9.9v3.6h-9.9zM156.6 333.4h3.5v3.8h-3.5zM156.6 338.4h3.7v3.8h-3.7zM156.6 343.5h3.7v3.8h-3.7zM156.6 348.5h4.1v3.8h-4.1zM156.6 353.6h3.4v3.8h-3.4zM156.6 358.6h4v3.8h-4zM156.6 363.6h4.1v3.8h-4.1zM156.6 368.7h3.5v3.8h-3.5zM156.6 373.7h4.1v3.8h-4.1zM156.6 378.8h4v3.8h-4zM156.6 383.8h4.1v3.8h-4.1zM156.6 388.8h3.6v3.8h-3.6zM156.6 393.9h3.7v3.8h-3.7zM156.6 398.9h3.7v3.8h-3.7zM156.6 404h4.2v3.8h-4.2zM156.6 409h3.9v3.8h-3.9zM156.6 414h3.7v3.8h-3.7zM156.6 419.1h3.7v3.8h-3.7zM156.6 424.1h3.6v3.8h-3.6zM156.6 429.2h3.4v3.8h-3.4zM163.9 333.4h11.7v3.8h-11.7zM164 338.4h12v3.8h-12zM163.6 343.5h12.3v3.8h-12.3zM163.5 348.5h12.9v3.8h-12.9zM164 353.6h12.2v3.8h-12.2zM163.9 358.6h13.3v3.8h-13.3zM163.9 363.6h12.7v3.8h-12.7zM163.7 368.7h13.6v3.8h-13.6zM163.4 373.7h13.4v3.8h-13.4zM163.7 378.8h13.2v3.8h-13.2zM163.8 383.8h13.1v3.8h-13.1zM163.4 388.8h12.5v3.8h-12.5zM163.5 393.9h13.8v3.8h-13.8zM163.6 398.9h12.7v3.8h-12.7zM163.8 404h10.2v3.8h-10.2zM163.6 409h11.8v3.8h-11.8zM163.6 414h11.1v3.8h-11.1zM163.6 419.1h10.9v3.8h-10.9zM163.5 424.1h10.2v3.8h-10.2zM163.9 429.2h9.9v3.8h-9.9zM195 332.9h9.9v4.9h-9.9zM195.5 337.9h10.1v4.9h-10.1zM195 343h9.8v4.9h-9.8zM195 348h9.5v4.9h-9.5zM195 353.1h9.7v4.9h-9.7zM195.1 358.1h9.4v4.9h-9.4zM195.4 363.1h9.6v4.9h-9.6zM195.1 368.2h10.2v4.9h-10.2zM195.2 373.2h9.5v4.9h-9.5zM195.1 378.3h9.6v4.9h-9.6zM195.1 383.3h9.1v4.9h-9.1zM195 388.3h12.7v4.9h-12.7zM195.3 393.4h11.6v4.9h-11.6zM195 398.4h12.5v4.9h-12.5zM195 403.5h9.5v4.9h-9.5zM195.2 408.5h9.6v4.9h-9.6zM195.4 413.5h10.2v4.9h-10.2zM194.9 418.6h10.6v4.9h-10.6zM195.3 423.6h8.8v4.9h-8.8zM195.2 428.7h10.3v4.9h-10.3zM228 333.4h1.4v3.8h-1.4zM228 338.4h1.2v3.8h-1.2zM228 353.6h1.4v3.8h-1.4zM228 358.6h1.6v3.8h-1.6zM228 363.6h1.5v3.8h-1.5zM228 404h1.5v3.8h-1.5zM228 409h1.6v3.8h-1.6zM228 414h1.3v3.8h-1.3zM228 429.2h1.2v3.8h-1.2zM233.2 332.9h5.7v4.9h-5.7zM233.2 337.9h6v4.9h-6zM233.2 343h6.2v4.9h-6.2zM233.2 348h6.4v4.9h-6.4zM233.2 353.1h6.2v4.9h-6.2zM233.2 358.1h6.1v4.9h-6.1zM233.2 363.1h6.3v4.9h-6.3zM233.2 368.2h6v4.9h-6zM233.2 373.2h6.1v4.9h-6.1zM233.2 378.3h5.5v4.9h-5.5zM233.2 383.3h6.3v4.9h-6.3zM233.2 388.3h5.7v4.9h-5.7zM233.2 393.4h6.4v4.9h-6.4zM233.2 398.4h6.1v4.9h-6.1zM233.2 403.5h5.8v4.9h-5.8zM233.2 408.5h5.6v4.9h-5.6zM233.2 413.5h5.8v4.9h-5.8zM233.2 418.6h6.1v4.9h-6.1zM233.2 423.6h6.2v4.9h-6.2zM233.2 428.7h5.6v4.9h-5.6zM242.4 332.9h5.2v4.9h-5.2zM242.4 337.9h5.6v4.9h-5.6zM242.4 343h5.7v4.9h-5.7zM242.4 348h5.5v4.9h-5.5zM242.4 353.1h5.3v4.9h-5.3zM242.4 358.1h5.7v4.9h-5.7zM242.4 363.1h5.1v4.9h-5.1zM242.4 368.2h5.4v4.9h-5.4zM242.4 373.2h5.6v4.9h-5.6zM242.4 378.3h6.1v4.9h-6.1zM242.4 383.3h5.7v4.9h-5.7zM242.4 388.3h6v4.9h-6zM242.4 393.4h5.6v4.9h-5.6zM242.4 398.4h5.3v4.9h-5.3zM242.4 403.5h5.3v4.9h-5.3zM242.4 408.5h6.1v4.9h-6.1zM242.4 413.5h5.8v4.9h-5.8zM242.4 418.6h5.4v4.9h-5.4zM242.4 423.6h5.1v4.9h-5.1zM242.4 428.7h5.6v4.9h-5.6zM252.5 332.9h10.7v4.9h-10.7zM252.6 337.9h10v4.9h-10zM252.3 343h11.2v4.9h-11.2zM252.4 348h9.8v4.9h-9.8zM252.6 353.1h10.2v4.9h-10.2zM252.7 358.1h9.8v4.9h-9.8zM252.5 363.1h10.7v4.9h-10.7zM252.8 368.2h9.7v4.9h-9.7zM252.7 373.2h9.9v4.9h-9.9zM252.3 378.3h10.2v4.9h-10.2zM252.4 383.3h10.9v4.9h-10.9zM252.5 388.3h11v4.9h-11zM252.3 393.4h10.1v4.9h-10.1zM252.6 398.4h10.2v4.9h-10.2zM252.3 403.5h11.2v4.9h-11.2zM252.3 408.5h10.4v4.9h-10.4zM252.3 413.5h11.3v4.9h-11.3zM252.2 418.6h10v4.9h-10zM252.7 423.6h10v4.9h-10zM252.6 428.7h10.8v4.9h-10.8zM156.4 327.1h4v4.6h-4zM164.4 327.1h2v4.6h-2zM172.4 327.1h2v4.6h-2zM188.4 327.1h4v4.6h-4zM197.4 327.1h2v4.6h-2zM205.4 327.1h2v4.6h-2zM222.4 327.1h8v4.6h-8zM233.4 327.1h2v4.6h-2zM237.4 327.1h2v4.6h-2zM243.4 327.1h2v4.6h-2zM257.4 327.1h2v4.6h-2zM265.4 327.1h2v4.6h-2zM312.4 327.1h7v4.6h-7zM155.9 447.8h6.3v3.4h-6.3zM162.9 447.8h12.3v3.4h-12.3zM179.4 447.8h5.9v3.4h-5.9zM188.4 447.8h4.8v3.4h-4.8zM194.4 447.8h8.3v3.4h-8.3zM204.4 447.8h11.1v3.4h-11.1zM218.4 447.8h5.7v3.4h-5.7zM227.4 447.8h4.1v3.4h-4.1zM232.9 447.8h7.9v3.4h-7.9zM251.4 447.8h5.9v3.4h-5.9zM233.4 434.6h5.5v3.2h-5.5zM233.4 438.8h5.5v3.2h-5.5zM233.4 443h5.5v3.2h-5.5zM277.4 435.9h7.9v4.5h-7.9zM276.4 444.9h10.8v5h-10.8zM295.4 434.9h25.7v3h-25.7zM298.4 440.7h5v2.6h-5zM313.4 440.7h5v2.6h-5zM302.4 446.6h9.9v3.6h-9.9zM360.2 333.4h4.3v3.8h-4.3zM360.2 338.4h4.8v3.8h-4.8zM360.2 343.5h4.1v3.8h-4.1zM360.2 348.5h4.8v3.8h-4.8zM360.2 353.6h4.2v3.8h-4.2zM360.2 358.6h4.3v3.8h-4.3zM360.2 363.6h4.7v3.8h-4.7zM360.2 368.7h4.7v3.8h-4.7zM360.2 373.7h4.3v3.8h-4.3zM360.2 378.8h4v3.8h-4zM360.2 383.8h4.4v3.8h-4.4zM360.2 388.8h4.3v3.8h-4.3zM360.2 393.9h4.7v3.8h-4.7zM360.2 398.9h4.2v3.8h-4.2zM367.5 333.4h12.7v3.8h-12.7zM367.2 338.4h12.3v3.8h-12.3zM367.5 343.5h13.7v3.8h-13.7zM367 348.5h12.6v3.8h-12.6zM367.6 353.6h12.1v3.8h-12.1zM367.4 358.6h12.6v3.8h-12.6zM367.2 363.6h14.1v3.8h-14.1zM367.6 368.7h12.5v3.8h-12.5zM367.2 373.7h13.6v3.8h-13.6zM367.2 378.8h13.7v3.8h-13.7zM367 383.8h13v3.8h-13zM367.5 388.8h13.5v3.8h-13.5zM367.6 393.9h4.2v3.8h-4.2zM367.1 398.9h12.4v3.8h-12.4zM399.1 332.9h11.9v4.9h-11.9zM398.7 337.9h14.6v4.9h-14.6zM398.8 343h13.5v4.9h-13.5zM399.1 348h13.9v4.9h-13.9zM399 353.1h16.1v4.9h-16.1zM399 358.1h16.7v4.9h-16.7zM398.9 363.1h15v4.9h-15zM398.7 368.2h12.8v4.9h-12.8zM399 373.2h12.6v4.9h-12.6zM398.6 378.3h12.1v4.9h-12.1zM398.6 383.3h5.1v4.9h-5.1zM398.5 388.3h3.2v4.9h-3.2zM398.7 393.4h7.5v4.9h-7.5zM399 398.4h16.4v4.9h-16.4zM431.6 333.4h2.4v3.8h-2.4zM431.6 338.4h2.1v3.8h-2.1zM431.6 363.6h2v3.8h-2zM431.6 373.7h2v3.8h-2zM431.6 383.8h2.2v3.8h-2.2zM431.6 388.8h2.3v3.8h-2.3zM431.6 393.9h2.2v3.8h-2.2zM431.6 398.9h2.1v3.8h-2.1zM437.4 332.9h5.7v4.9h-5.7zM437.4 337.9h5.9v4.9h-5.9zM437.4 343h6v4.9h-6zM437.4 348h6v4.9h-6zM437.4 353.1h6.1v4.9h-6.1zM437.4 358.1h6v4.9h-6zM437.4 363.1h5.4v4.9h-5.4zM437.4 368.2h6.1v4.9h-6.1zM437.4 373.2h5.6v4.9h-5.6zM437.4 378.3h5.9v4.9h-5.9zM437.4 383.3h5.7v4.9h-5.7zM437.4 388.3h6v4.9h-6zM437.4 393.4h5.5v4.9h-5.5zM437.4 398.4h5.5v4.9h-5.5zM446.5 332.9h5.7v4.9h-5.7zM446.5 337.9h5.7v4.9h-5.7zM446.5 343h6.4v4.9h-6.4zM446.5 348h6.1v4.9h-6.1zM446.5 353.1h5.8v4.9h-5.8zM446.5 358.1h5.9v4.9h-5.9zM446.5 363.1h6.5v4.9h-6.5zM446.5 368.2h6v4.9h-6zM446.5 373.2h5.7v4.9h-5.7zM446.5 378.3h6.3v4.9h-6.3zM446.5 383.3h6.2v4.9h-6.2zM446.5 388.3h6.5v4.9h-6.5zM446.5 393.4h5.6v4.9h-5.6zM446.5 398.4h6v4.9h-6zM456.5 332.9h10.5v4.9h-10.5zM456 337.9h11.1v4.9h-11.1zM456.1 343h10.1v4.9h-10.1zM456.6 348h9.4v4.9h-9.4zM456.6 353.1h10.1v4.9h-10.1zM456.5 358.1h9.8v4.9h-9.8zM456.2 363.1h10.3v4.9h-10.3zM456.6 368.2h10.4v4.9h-10.4zM456.4 373.2h9.5v4.9h-9.5zM456.1 378.3h10.6v4.9h-10.6zM456.1 383.3h10.2v4.9h-10.2zM456.2 388.3h9.9v4.9h-9.9zM456.4 393.4h6.3v4.9h-6.3zM456 398.4h10v4.9h-10zM360 327.1h4v4.6h-4zM368 327.1h2v4.6h-2zM376 327.1h2v4.6h-2zM392 327.1h4v4.6h-4zM401 327.1h2v4.6h-2zM409 327.1h2v4.6h-2zM426 327.1h8v4.6h-8zM437 327.1h2v4.6h-2zM441 327.1h2v4.6h-2zM447 327.1h2v4.6h-2zM461 327.1h2v4.6h-2zM469 327.1h2v4.6h-2zM516 327.1h7v4.6h-7zM359.5 447.8h5.9v3.4h-5.9zM366.5 447.8h12.1v3.4h-12.1zM383 447.8h5.8v3.4h-5.8zM392 447.8h4.9v3.4h-4.9zM398 447.8h7.8v3.4h-7.8zM408 447.8h11.2v3.4h-11.2zM422 447.8h6v3.4h-6zM431 447.8h3.7v3.4h-3.7zM436.5 447.8h7.8v3.4h-7.8zM455 447.8h5.9v3.4h-5.9zM437 434.6h5.5v3.2h-5.5zM437 438.8h5.5v3.2h-5.5zM437 443h5.5v3.2h-5.5zM481 435.9h8v4.5h-8zM480 444.9h11.1v5h-11.1zM499 434.9h25.8v3h-25.8zM502 440.7h5v2.6h-5zM517 440.7h5v2.6h-5zM506 446.6h9.8v3.6h-9.8zM157.4 483.4h1.7v3.8h-1.7zM157.4 488.4h1.6v3.8h-1.6zM157.4 493.5h1.5v3.8h-1.5zM162.9 483.4h9.8v3.8h-9.8zM162.9 488.4h10.5v3.8h-10.5zM162.9 493.5h9.8v3.8h-9.8zM194.9 482.9h8.6v4.9h-8.6zM194.9 487.9h15.3v4.9h-15.3zM194.9 493h8.4v4.9h-8.4zM227.6 482.9h3.3v4.9h-3.3zM227.6 487.9h3.4v4.9h-3.4zM227.6 493h3.1v4.9h-3.1zM233.6 482.9h5v4.9h-5zM233.6 487.9h5.4v4.9h-5.4zM233.6 493h5v4.9h-5zM242.9 482.9h4.6v4.9h-4.6zM242.9 487.9h5.3v4.9h-5.3zM242.9 493h4.9v4.9h-4.9zM156.4 477.1h4v4.6h-4zM164.4 477.1h2v4.6h-2zM172.4 477.1h2v4.6h-2zM188.4 477.1h4v4.6h-4zM197.4 477.1h2v4.6h-2zM205.4 477.1h2v4.6h-2zM222.4 477.1h8v4.6h-8zM233.4 477.1h2v4.6h-2zM237.4 477.1h2v4.6h-2zM243.4 477.1h2v4.6h-2zM257.4 477.1h2v4.6h-2zM265.4 477.1h2v4.6h-2zM312.4 477.1h7v4.6h-7zM155.9 597.8h6.2v3.4h-6.2zM162.9 597.8h11.9v3.4h-11.9zM179.4 597.8h6.2v3.4h-6.2zM188.4 597.8h5v3.4h-5zM194.4 597.8h7.8v3.4h-7.8zM204.4 597.8h10.7v3.4h-10.7zM218.4 597.8h6v3.4h-6zM227.4 597.8h4.1v3.4h-4.1zM232.9 597.8h8.2v3.4h-8.2zM251.4 597.8h5.8v3.4h-5.8zM233.4 584.6h5.5v3.2h-5.5zM233.4 588.8h5.5v3.2h-5.5zM233.4 593h5.5v3.2h-5.5zM277.4 585.9h8.1v4.5h-8.1zM276.4 594.9h10.9v5h-10.9zM295.4 584.9h26v3h-26zM298.4 590.7h5v2.6h-5zM313.4 590.7h5v2.6h-5zM302.4 596.6h9.8v3.6h-9.8zM278.5 486h25.4v7.5h-25.4zM360.5 483.4h2.5v3.8h-2.5zM360.5 488.4h3v3.8h-3zM360.5 493.5h2v3.8h-2zM360.5 498.5h2.5v3.8h-2.5zM360.5 503.6h2.9v3.8h-2.9zM360.5 508.6h3.1v3.8h-3.1zM360.5 513.6h2.1v3.8h-2.1zM360.5 518.7h2.1v3.8h-2.1zM360.5 523.7h3v3.8h-3zM360.5 528.8h3.1v3.8h-3.1zM360.5 533.8h2.5v3.8h-2.5zM367.6 483.4h6.4v3.8h-6.4zM367.5 488.4h9.2v3.8h-9.2zM367.5 493.5h10.8v3.8h-10.8zM367.5 498.5h9.7v3.8h-9.7zM367.2 503.6h11.1v3.8h-11.1zM367.5 508.6h14.3v3.8h-14.3zM367.1 513.6h12.1v3.8h-12.1zM367.3 518.7h12.4v3.8h-12.4zM367.1 523.7h12.6v3.8h-12.6zM367.4 528.8h12v3.8h-12zM367 533.8h3.9v3.8h-3.9zM399 482.9h5.6v4.9h-5.6zM399 487.9h4.8v4.9h-4.8zM398.9 493h5v4.9h-5zM398.9 498h5.7v4.9h-5.7zM398.8 503.1h5.4v4.9h-5.4zM398.8 508.1h12.9v4.9h-12.9zM398.8 513.1h12v4.9h-12zM398.5 518.2h11.9v4.9h-11.9zM398.8 523.2h5.9v4.9h-5.9zM399 528.3h5.1v4.9h-5.1zM398.8 533.3h8.2v4.9h-8.2zM360 477.1h5v4.6h-5zM370 477.1h2v4.6h-2zM377 477.1h2v4.6h-2zM392 477.1h4v4.6h-4zM401 477.1h2v4.6h-2zM409 477.1h2v4.6h-2zM426 477.1h8v4.6h-8zM438 477.1h3v4.6h-3zM447 477.1h4v4.6h-4zM462 477.1h2v4.6h-2zM469 477.1h2v4.6h-2zM516 477.1h4v4.6h-4zM522 477.1h2v4.6h-2zM359.5 597.8h5.8v3.4h-5.8zM366.5 597.8h12v3.4h-12zM383 597.8h5.8v3.4h-5.8zM392 597.8h4.8v3.4h-4.8zM398 597.8h8v3.4h-8zM408 597.8h10.8v3.4h-10.8zM422 597.8h6v3.4h-6zM431 597.8h4v3.4h-4zM436.5 597.8h7.7v3.4h-7.7zM455 597.8h6.1v3.4h-6.1zM437 584.6h5.5v3.2h-5.5zM437 588.8h5.5v3.2h-5.5zM437 593h5.5v3.2h-5.5zM481 585.9h7.7v4.5h-7.7zM480 594.9h11.1v5h-11.1zM499 584.9h26.2v3h-26.2zM502 590.7h5v2.6h-5zM517 590.7h5v2.6h-5zM506 596.6h10v3.6h-10z"/><path id="gp2" d="M565.6 427.3h3.2v3.8h-3.2zM565.6 432.3h3.6v3.8h-3.6zM565.6 437.4h3.5v3.8h-3.5zM565.6 442.4h4.1v3.8h-4.1zM565.6 447.4h3.2v3.8h-3.2zM565.6 452.4h4v3.8h-4zM565.6 457.5h4.1v3.8h-4.1zM565.6 462.5h3.8v3.8h-3.8zM565.6 467.5h3.9v3.8h-3.9zM565.6 472.6h3.3v3.8h-3.3zM565.6 477.6h4.1v3.8h-4.1zM565.6 482.6h3.6v3.8h-3.6zM565.6 487.7h4.1v3.8h-4.1zM565.6 492.7h4v3.8h-4zM565.6 497.7h3.3v3.8h-3.3zM565.6 502.7h3.9v3.8h-3.9zM565.6 507.8h4v3.8h-4zM565.6 512.8h3.2v3.8h-3.2zM565.6 517.8h3.5v3.8h-3.5zM565.6 522.9h3.9v3.8h-3.9zM565.6 527.9h3.3v3.8h-3.3zM565.6 532.9h4v3.8h-4zM565.6 538h3.4v3.8h-3.4zM565.6 543h3.9v3.8h-3.9zM565.6 548h3.2v3.8h-3.2zM565.6 553h3.6v3.8h-3.6zM565.6 558.1h4v3.8h-4zM565.6 563.1h3.3v3.8h-3.3zM565.6 568.1h3.4v3.8h-3.4zM565.6 573.2h3.6v3.8h-3.6zM572.1 427.3h13.6v3.8h-13.6zM572.2 432.3h13.3v3.8h-13.3zM572.5 437.4h14.5v3.8h-14.5zM572.2 442.4h14.7v3.8h-14.7zM572.2 447.4h14.5v3.8h-14.5zM572.5 452.4h13.7v3.8h-13.7zM572.6 457.5h13.2v3.8h-13.2zM572.4 462.5h13.8v3.8h-13.8zM572.2 467.5h14.7v3.8h-14.7zM572.5 472.6h14.6v3.8h-14.6zM572.6 477.6h13.3v3.8h-13.3zM572.7 482.6h12.9v3.8h-12.9zM572.3 487.7h13.9v3.8h-13.9zM572.4 492.7h14.3v3.8h-14.3zM572.5 497.7h12.9v3.8h-12.9zM572.6 502.7h12.6v3.8h-12.6zM572.5 507.8h13.1v3.8h-13.1zM572.5 512.8h14.6v3.8h-14.6zM572.3 517.8h14.1v3.8h-14.1zM572.1 522.9h13v3.8h-13zM572.5 527.9h12.9v3.8h-12.9zM572.4 532.9h13.6v3.8h-13.6zM572.2 538h14.7v3.8h-14.7zM572.5 543h13.1v3.8h-13.1zM572.1 548h13v3.8h-13zM572.2 553h13.6v3.8h-13.6zM572.2 558.1h13.6v3.8h-13.6zM572.5 563.1h13.8v3.8h-13.8zM572.5 568.1h13v3.8h-13zM572.2 573.2h13.9v3.8h-13.9zM598.2 426.8h5.6v4.9h-5.6zM598.2 431.8h4.4v4.9h-4.4zM598.6 436.9h4.7v4.9h-4.7zM598.3 441.9h5.2v4.9h-5.2zM598.1 446.9h4.6v4.9h-4.6zM598.4 451.9h4.9v4.9h-4.9zM598.5 457h4.4v4.9h-4.4zM598.7 462h4.3v4.9h-4.3zM598.2 467h5.2v4.9h-5.2zM598.1 472.1h5.6v4.9h-5.6zM598.3 477.1h4.8v4.9h-4.8zM598.1 482.1h4.5v4.9h-4.5zM598.1 487.2h5.4v4.9h-5.4zM598.7 492.2h4.5v4.9h-4.5zM598.2 497.2h4.3v4.9h-4.3zM598.4 502.2h4.9v4.9h-4.9zM598.6 507.3h10.2v4.9h-10.2zM598.3 512.3h9.8v4.9h-9.8zM598.1 517.3h10.2v4.9h-10.2zM598.6 522.4h10.7v4.9h-10.7zM598.1 527.4h10.8v4.9h-10.8zM598.5 532.4h10.6v4.9h-10.6zM598.5 537.5h10v4.9h-10zM598.2 542.5h10.3v4.9h-10.3zM598.2 547.5h9.7v4.9h-9.7zM598.3 552.5h9.6v4.9h-9.6zM598.5 557.6h10.5v4.9h-10.5zM598.5 562.6h10.6v4.9h-10.6zM598.4 567.6h9.8v4.9h-9.8zM598.6 572.7h9.9v4.9h-9.9zM632.2 442.4h1.8v3.8h-1.8zM632.2 457.5h1.7v3.8h-1.7zM632.2 472.6h1.9v3.8h-1.9zM632.2 477.6h2v3.8h-2zM632.2 497.7h1.7v3.8h-1.7zM632.2 512.8h2v3.8h-2zM632.2 522.9h1.6v3.8h-1.6zM632.2 532.9h1.7v3.8h-1.7zM632.2 538h1.7v3.8h-1.7zM632.2 553h1.9v3.8h-1.9zM632.2 568.1h2v3.8h-2zM638.6 426.8h6.4v4.9h-6.4zM638.6 431.8h6v4.9h-6zM638.6 436.9h6.6v4.9h-6.6zM638.6 441.9h6v4.9h-6zM638.6 446.9h5.9v4.9h-5.9zM638.6 451.9h6.6v4.9h-6.6zM638.6 457h6.3v4.9h-6.3zM638.6 462h6.4v4.9h-6.4zM638.6 467h6.4v4.9h-6.4zM638.6 472.1h6.7v4.9h-6.7zM638.6 477.1h6.2v4.9h-6.2zM638.6 482.1h6.5v4.9h-6.5zM638.6 487.2h6.4v4.9h-6.4zM638.6 492.2h6.6v4.9h-6.6zM638.6 497.2h6.1v4.9h-6.1zM638.6 502.2h6.4v4.9h-6.4zM638.6 507.3h6.3v4.9h-6.3zM638.6 512.3h6v4.9h-6zM638.6 517.3h5.9v4.9h-5.9zM638.6 522.4h6.3v4.9h-6.3zM638.6 527.4h5.8v4.9h-5.8zM638.6 532.4h6.6v4.9h-6.6zM638.6 537.5h5.8v4.9h-5.8zM638.6 542.5h5.7v4.9h-5.7zM638.6 547.5h5.8v4.9h-5.8zM638.6 552.5h6.6v4.9h-6.6zM638.6 557.6h6v4.9h-6zM638.6 562.6h5.8v4.9h-5.8zM638.6 567.6h5.7v4.9h-5.7zM638.6 572.7h5.7v4.9h-5.7zM647.2 426.8h6.4v4.9h-6.4zM647.2 431.8h6.4v4.9h-6.4zM647.2 436.9h6.4v4.9h-6.4zM647.2 441.9h6.5v4.9h-6.5zM647.2 446.9h5.7v4.9h-5.7zM647.2 451.9h6.3v4.9h-6.3zM647.2 457h6v4.9h-6zM647.2 462h6.6v4.9h-6.6zM647.2 467h6.6v4.9h-6.6zM647.2 472.1h6.7v4.9h-6.7zM647.2 477.1h5.7v4.9h-5.7zM647.2 482.1h6.6v4.9h-6.6zM647.2 487.2h6.7v4.9h-6.7zM647.2 492.2h6.7v4.9h-6.7zM647.2 497.2h5.7v4.9h-5.7zM647.2 502.2h5.8v4.9h-5.8zM647.2 507.3h5.7v4.9h-5.7zM647.2 512.3h5.6v4.9h-5.6zM647.2 517.3h6.6v4.9h-6.6zM647.2 522.4h6.6v4.9h-6.6zM647.2 527.4h6.4v4.9h-6.4zM647.2 532.4h6.6v4.9h-6.6zM647.2 537.5h6.4v4.9h-6.4zM647.2 542.5h5.9v4.9h-5.9zM647.2 547.5h5.7v4.9h-5.7zM647.2 552.5h5.7v4.9h-5.7zM647.2 557.6h6.5v4.9h-6.5zM647.2 562.6h5.8v4.9h-5.8zM647.2 567.6h6v4.9h-6zM647.2 572.7h6.1v4.9h-6.1zM565.6 421.1h4v4.2h-4zM578.6 421.1h4v4.2h-4zM601.6 421.1h2v4.2h-2zM606.6 421.1h2v4.2h-2zM625.6 421.1h5v4.2h-5zM631.6 421.1h4v4.2h-4zM638.6 421.1h3v4.2h-3zM646.6 421.1h3v4.2h-3zM661.6 421.1h2v4.2h-2zM668.6 421.1h3v4.2h-3zM565.6 583h18.7v3.2h-18.7zM587.6 583h3v3h-3zM595.6 583.4h5v2h-5zM565.6 587.4h5.9v3.3h-5.9zM565.6 591.7h5.9v3.3h-5.9zM565.6 596h6.1v3.3h-6.1zM584.6 596.4h5v2.8h-5zM616.6 580.6h6.9v5.4h-6.9zM614.6 591.7h13.9v5.4h-13.9zM638.6 578.8h38.2v4.4h-38.2zM644.6 585.4h7v3h-7zM664.6 585.4h7v3h-7zM648.6 591.7h13v5.2h-13zM717.2 427.3h4.6v3.8h-4.6zM717.2 432.3h4.3v3.8h-4.3zM717.2 437.4h3.7v3.8h-3.7zM717.2 442.4h4.1v3.8h-4.1zM717.2 447.4h4.1v3.8h-4.1zM717.2 452.4h4.5v3.8h-4.5zM717.2 457.5h4v3.8h-4zM717.2 462.5h4.4v3.8h-4.4zM717.2 467.5h4.2v3.8h-4.2zM717.2 472.6h3.9v3.8h-3.9zM717.2 477.6h4.6v3.8h-4.6zM717.2 482.6h3.8v3.8h-3.8zM717.2 487.7h4.5v3.8h-4.5zM717.2 492.7h3.9v3.8h-3.9zM717.2 497.7h3.7v3.8h-3.7zM717.2 502.7h3.9v3.8h-3.9zM717.2 507.8h4.5v3.8h-4.5zM717.2 512.8h4.7v3.8h-4.7zM717.2 517.8h3.7v3.8h-3.7zM717.2 522.9h4.2v3.8h-4.2zM717.2 527.9h4.2v3.8h-4.2zM717.2 532.9h4.5v3.8h-4.5zM717.2 538h3.9v3.8h-3.9zM717.2 543h4.2v3.8h-4.2zM717.2 548h4v3.8h-4zM717.2 553h4.5v3.8h-4.5zM717.2 558.1h4v3.8h-4zM717.2 563.1h4.6v3.8h-4.6zM717.2 568.1h4v3.8h-4zM717.2 573.2h3.9v3.8h-3.9zM724 427.3h14.1v3.8h-14.1zM724.1 432.3h12.8v3.8h-12.8zM724.2 437.4h12.7v3.8h-12.7zM724.2 442.4h13.9v3.8h-13.9zM723.9 447.4h14v3.8h-14zM723.9 452.4h13.6v3.8h-13.6zM723.8 457.5h14.7v3.8h-14.7zM723.7 462.5h14.8v3.8h-14.8zM723.9 467.5h13.3v3.8h-13.3zM724 472.6h14.5v3.8h-14.5zM724.2 477.6h13.2v3.8h-13.2zM724 482.6h13.2v3.8h-13.2zM724.2 487.7h13.6v3.8h-13.6zM724.1 492.7h14.1v3.8h-14.1zM723.9 497.7h13.5v3.8h-13.5zM724.2 502.7h12.8v3.8h-12.8zM724.1 507.8h13.9v3.8h-13.9zM724 512.8h13.1v3.8h-13.1zM724 517.8h14.2v3.8h-14.2zM724 522.9h13v3.8h-13zM723.8 527.9h14.6v3.8h-14.6zM723.9 532.9h13.2v3.8h-13.2zM724.2 538h10.9v3.8h-10.9zM723.8 543h10.2v3.8h-10.2zM723.9 548h10.3v3.8h-10.3zM723.8 553h13.9v3.8h-13.9zM723.8 558.1h13.5v3.8h-13.5zM724.1 563.1h14.5v3.8h-14.5zM724.3 568.1h12.6v3.8h-12.6zM723.9 573.2h13v3.8h-13zM750.2 426.8h13v4.9h-13zM750 431.8h10.7v4.9h-10.7zM750.1 436.9h9.5v4.9h-9.5zM749.8 441.9h6.6v4.9h-6.6zM749.7 446.9h6.3v4.9h-6.3zM750.2 451.9h5.8v4.9h-5.8zM750 457h6.6v4.9h-6.6zM750 462h6.5v4.9h-6.5zM750.1 467h5.4v4.9h-5.4zM750.1 472.1h5.9v4.9h-5.9zM750 477.1h7.1v4.9h-7.1zM750.1 482.1h6.2v4.9h-6.2zM749.8 487.2h6.2v4.9h-6.2zM750.2 492.2h6.4v4.9h-6.4zM750.1 497.2h6.6v4.9h-6.6zM750.1 502.2h6.8v4.9h-6.8zM750 507.3h6.5v4.9h-6.5zM750.1 512.3h5.7v4.9h-5.7zM750 517.3h9.4v4.9h-9.4zM750.1 522.4h11.6v4.9h-11.6zM749.9 527.4h11.6v4.9h-11.6zM750 532.4h3.1v4.9h-3.1zM749.9 537.5h4.5v4.9h-4.5zM750.3 542.5h11.3v4.9h-11.3zM750.1 547.5h13.5v4.9h-13.5zM749.9 552.5h9.8v4.9h-9.8zM750.3 557.6h6.9v4.9h-6.9zM750 562.6h7.3v4.9h-7.3zM750.2 567.6h12.4v4.9h-12.4zM750 572.7h14.1v4.9h-14.1zM783 442.4h2.4v3.8h-2.4zM783 452.4h2.6v3.8h-2.6zM783 482.6h2.6v3.8h-2.6zM783 487.7h2.7v3.8h-2.7zM783 492.7h2.6v3.8h-2.6zM783 538h2.7v3.8h-2.7zM783 543h2.7v3.8h-2.7zM783 548h2.6v3.8h-2.6zM790.2 426.8h5.9v4.9h-5.9zM790.2 431.8h6.4v4.9h-6.4zM790.2 436.9h5.7v4.9h-5.7zM790.2 441.9h6.2v4.9h-6.2zM790.2 446.9h5.9v4.9h-5.9zM790.2 451.9h6.3v4.9h-6.3zM790.2 457h5.6v4.9h-5.6zM790.2 462h6.5v4.9h-6.5zM790.2 467h5.9v4.9h-5.9zM790.2 472.1h5.6v4.9h-5.6zM790.2 477.1h5.8v4.9h-5.8zM790.2 482.1h5.9v4.9h-5.9zM790.2 487.2h5.5v4.9h-5.5zM790.2 492.2h5.9v4.9h-5.9zM790.2 497.2h5.9v4.9h-5.9zM790.2 502.2h6.2v4.9h-6.2zM790.2 507.3h5.9v4.9h-5.9zM790.2 512.3h5.8v4.9h-5.8zM790.2 517.3h5.7v4.9h-5.7zM790.2 522.4h6.2v4.9h-6.2zM790.2 527.4h6.4v4.9h-6.4zM790.2 532.4h6v4.9h-6zM790.2 537.5h5.7v4.9h-5.7zM790.2 542.5h6.3v4.9h-6.3zM790.2 547.5h5.9v4.9h-5.9zM790.2 552.5h5.7v4.9h-5.7zM790.2 557.6h5.6v4.9h-5.6zM790.2 562.6h6.3v4.9h-6.3zM790.2 567.6h6.3v4.9h-6.3zM790.2 572.7h6.1v4.9h-6.1zM798.8 426.8h6v4.9h-6zM798.8 431.8h6.1v4.9h-6.1zM798.8 436.9h5.7v4.9h-5.7zM798.8 441.9h6.6v4.9h-6.6zM798.8 446.9h5.8v4.9h-5.8zM798.8 451.9h6.2v4.9h-6.2zM798.8 457h6.4v4.9h-6.4zM798.8 462h6.4v4.9h-6.4zM798.8 467h6v4.9h-6zM798.8 472.1h5.8v4.9h-5.8zM798.8 477.1h6.1v4.9h-6.1zM798.8 482.1h5.6v4.9h-5.6zM798.8 487.2h6.4v4.9h-6.4zM798.8 492.2h5.8v4.9h-5.8zM798.8 497.2h6.4v4.9h-6.4zM798.8 502.2h5.7v4.9h-5.7zM798.8 507.3h5.9v4.9h-5.9zM798.8 512.3h5.7v4.9h-5.7zM798.8 517.3h5.9v4.9h-5.9zM798.8 522.4h5.6v4.9h-5.6zM798.8 527.4h5.4v4.9h-5.4zM798.8 532.4h6.3v4.9h-6.3zM798.8 537.5h5.7v4.9h-5.7zM798.8 542.5h5.7v4.9h-5.7zM798.8 547.5h5.8v4.9h-5.8zM798.8 552.5h6v4.9h-6zM798.8 557.6h5.9v4.9h-5.9zM798.8 562.6h6.2v4.9h-6.2zM798.8 567.6h6.2v4.9h-6.2zM798.8 572.7h5.8v4.9h-5.8zM717.2 421.1h4v4.2h-4zM730.2 421.1h4v4.2h-4zM753.2 421.1h2v4.2h-2zM758.2 421.1h2v4.2h-2zM777.2 421.1h5v4.2h-5zM783.2 421.1h4v4.2h-4zM790.2 421.1h3v4.2h-3zM798.2 421.1h3v4.2h-3zM813.2 421.1h2v4.2h-2zM820.2 421.1h3v4.2h-3zM717.2 583h19.3v3.2h-19.3zM739.2 583h3v3h-3zM747.2 583.4h5v2h-5zM717.2 587.4h6.2v3.3h-6.2zM717.2 591.7h5.7v3.3h-5.7zM717.2 596h6.2v3.3h-6.2zM736.2 596.4h5v2.8h-5zM768.2 580.6h7.2v5.4h-7.2zM766.2 591.7h14.2v5.4h-14.2zM790.2 578.8h37.9v4.4h-37.9zM796.2 585.4h7v3h-7zM816.2 585.4h7v3h-7zM800.2 591.7h13.2v5.2h-13.2zM809.7 427.5h17.6v3.8h-17.6zM809.7 432.5h17v3.8h-17zM809.7 437.6h17v3.8h-17zM810.2 541.2h17.2v6.4h-17.2zM810.2 562.5h14.1v4.6h-14.1zM865.6 427.3h4v3.8h-4zM865.6 432.3h3.8v3.8h-3.8zM865.6 437.4h3.8v3.8h-3.8zM865.6 442.4h3.9v3.8h-3.9zM865.6 447.4h4.5v3.8h-4.5zM865.6 452.4h4v3.8h-4zM865.6 457.5h3.9v3.8h-3.9zM865.6 462.5h4.6v3.8h-4.6zM865.6 467.5h4.5v3.8h-4.5zM865.6 472.6h3.9v3.8h-3.9zM865.6 477.6h4.6v3.8h-4.6zM865.6 482.6h4.3v3.8h-4.3zM865.6 487.7h4.5v3.8h-4.5zM865.6 492.7h4.4v3.8h-4.4zM865.6 497.7h4.6v3.8h-4.6zM865.6 502.7h4.5v3.8h-4.5zM873.2 427.3h14.1v3.8h-14.1zM873.4 432.3h13.6v3.8h-13.6zM873.4 437.4h13.7v3.8h-13.7zM873.4 442.4h13.9v3.8h-13.9zM873.2 447.4h12.9v3.8h-12.9zM873.4 452.4h12.5v3.8h-12.5zM873.4 457.5h12.3v3.8h-12.3zM873.4 462.5h12.5v3.8h-12.5zM873.4 467.5h13.2v3.8h-13.2zM873.1 472.6h14.2v3.8h-14.2zM873.4 477.6h10.9v3.8h-10.9zM873.5 482.6h4.2v3.8h-4.2zM873.3 487.7h14v3.8h-14zM873.7 492.7h15.8v3.8h-15.8zM873.5 497.7h15.3v3.8h-15.3zM873.1 502.7h15.8v3.8h-15.8zM898.5 426.8h12.3v4.9h-12.3zM898.3 431.8h14.2v4.9h-14.2zM898.4 436.9h15.2v4.9h-15.2zM898.6 441.9h14.9v4.9h-14.9zM898.5 446.9h16.1v4.9h-16.1zM898.3 451.9h17.5v4.9h-17.5zM898.3 457h15v4.9h-15zM898.4 462h13.1v4.9h-13.1zM898.2 467h13.9v4.9h-13.9zM898.4 472.1h13.1v4.9h-13.1zM898.6 477.1h7.1v4.9h-7.1zM898.6 482.1h6.6v4.9h-6.6zM898.4 487.2h14v4.9h-14zM898.4 492.2h23.7v4.9h-23.7zM898.5 497.2h25.1v4.9h-25.1zM898.3 502.2h14.9v4.9h-14.9zM931.4 432.3h2.5v3.8h-2.5zM931.4 452.4h2.5v3.8h-2.5zM931.4 457.5h2.6v3.8h-2.6zM931.4 462.5h2.7v3.8h-2.7zM931.4 467.5h2.7v3.8h-2.7zM931.4 477.6h2.4v3.8h-2.4zM931.4 482.6h2.7v3.8h-2.7zM931.4 487.7h2.8v3.8h-2.8zM931.4 492.7h2.6v3.8h-2.6zM931.4 497.7h2.4v3.8h-2.4zM931.4 502.7h2.5v3.8h-2.5zM938.6 426.8h5.5v4.9h-5.5zM938.6 431.8h5.7v4.9h-5.7zM938.6 436.9h6.4v4.9h-6.4zM938.6 441.9h6.1v4.9h-6.1zM938.6 446.9h6.2v4.9h-6.2zM938.6 451.9h6.3v4.9h-6.3zM938.6 457h6.4v4.9h-6.4zM938.6 462h6.1v4.9h-6.1zM938.6 467h6.1v4.9h-6.1zM938.6 472.1h6.1v4.9h-6.1zM938.6 477.1h6.2v4.9h-6.2zM938.6 482.1h6.1v4.9h-6.1zM938.6 487.2h6.2v4.9h-6.2zM938.6 492.2h5.7v4.9h-5.7zM938.6 497.2h6.2v4.9h-6.2zM938.6 502.2h6v4.9h-6zM947.2 426.8h6.3v4.9h-6.3zM947.2 431.8h5.5v4.9h-5.5zM947.2 436.9h5.6v4.9h-5.6zM947.2 441.9h5.4v4.9h-5.4zM947.2 446.9h6.3v4.9h-6.3zM947.2 451.9h6.5v4.9h-6.5zM947.2 457h6.2v4.9h-6.2zM947.2 462h5.8v4.9h-5.8zM947.2 467h6.4v4.9h-6.4zM947.2 472.1h6.3v4.9h-6.3zM947.2 477.1h6.1v4.9h-6.1zM947.2 482.1h5.7v4.9h-5.7zM947.2 487.2h5.8v4.9h-5.8zM947.2 492.2h5.9v4.9h-5.9zM947.2 497.2h5.8v4.9h-5.8zM947.2 502.2h5.9v4.9h-5.9zM865.6 421.1h4v4.2h-4zM878.6 421.1h4v4.2h-4zM901.6 421.1h2v4.2h-2zM906.6 421.1h2v4.2h-2zM925.6 421.1h5v4.2h-5zM931.6 421.1h4v4.2h-4zM938.6 421.1h3v4.2h-3zM946.6 421.1h3v4.2h-3zM961.6 421.1h2v4.2h-2zM968.6 421.1h3v4.2h-3zM865.6 583h19.1v3.2h-19.1zM887.6 583h3v3h-3zM895.6 583.4h5v2h-5zM865.6 587.4h6.3v3.3h-6.3zM865.6 591.7h5.7v3.3h-5.7zM865.6 596h6v3.3h-6zM884.6 596.4h5v2.8h-5zM916.6 580.6h6.7v5.4h-6.7zM914.6 591.7h13.8v5.4h-13.8zM938.6 578.8h38.1v4.4h-38.1zM944.6 585.4h7v3h-7zM964.6 585.4h7v3h-7zM948.6 591.7h13v5.2h-13z"/></defs><use href="#gp" fill="#00ff00"/><use href="#gp2" fill="#00ff00"/><use href="#gp" fill="url(#tx)"/><use href="#gp2" fill="url(#tx2)"/><path d="M155.5 176.5H322.5V302.5H155.5zM357.5 176.5H526.5V302.5H357.5zM571.5 176.5H738.5V302.5H571.5zM155.5 326.5H322.5V452.5H155.5zM357.5 326.5H526.5V452.5H357.5zM155.5 476.5H322.5V602.5H155.5zM275.5 482.5H308.5V497.5H275.5zM357.5 476.5H526.5V602.5H357.5zM564.5 420.5H677.5V600.5H564.5zM807.5 537.5H829.5V551.5H807.5zM716.5 420.5H829.5V600.5H716.5zM864.5 420.5H977.5V600.5H864.5z" stroke="#fff" stroke-width="1" fill="none"/><path d="M139.5 172.5H326.5V304.5H139.5zM342.5 172.5H529.5V304.5H342.5zM555.5 172.5H741.5V304.5H555.5zM139.5 322.5H326.5V454.5H139.5zM342.5 322.5H529.5V454.5H342.5zM139.5 472.5H326.5V604.5H139.5zM342.5 472.5H529.5V604.5H342.5zM549.5 416.5H680.5V603.5H549.5zM701.5 416.5H833.5V603.5H701.5zM848.5 416.5H981.5V603.5H848.5z" stroke="#de161e" stroke-width="1" fill="none"/></svg>
<svg style="left:0;top:0" width="200" height="729" viewBox="0 0 200 729" fill="none" stroke="#fff" stroke-width="1">
<rect x="38.5" y="598.5" width="10" height="10"/>
<path d="M43.5 603.5V525M43.5 524.5l-2.6 8.5M43.5 524.5l2.6 8.5M43.5 603.5H122M122.5 603.5l-8.5-2.6M122.5 603.5l-8.5 2.6"/>
<path d="M40 502.5l5 6.5 5-6.5M45 509v8"/>
<path d="M131.5 597.5l10 13M141.5 597.5l-10 13"/>
</svg>
<svg style="left:28px;top:625px" width="200" height="12" viewBox="0 0 200 12">
<path d="M8.5 3l-4.5 4 4.5 4zM3 3v8" fill="#7b848d" stroke="#7b848d" stroke-width="1"/>
<path d="M25 3l-4.5 4 4.5 4z" fill="#7b848d"/>
<path d="M35 3l4.500 4-4.500 4z" fill="#7b848d"/>
<path d="M50 3l4.500 4-4.500 4zM56 3v8" fill="#7b848d" stroke="#7b848d" stroke-width="1"/>
<path d="M62 0l5 12" stroke="#dfe3e7" stroke-width="1"/>
<path d="M68 12h36l4.500-12h-44z" fill="#343c45"/>
<path d="M109 0l-4.500 12M157 0l-4.500 12" stroke="#c9ced3" stroke-width="1"/>
</svg>
<div class="a" style="left:28px;top:625px;width:300px;height:12px;overflow:hidden"><div class="t" style="left:72px;top:0px;font-size:14px;color:#f2f4f6;font-weight:500">模型</div><div class="t" style="left:113px;top:0px;font-size:14px;color:#c5cad0">布局1</div></div>
<div class="a" style="left:1126px;top:136px;width:219px;height:1px;background:#9c9c9c;"></div>
<div class="a" style="left:1126px;top:142px;width:219px;height:1px;background:#9c9c9c;"></div>
<svg style="left:1350px;top:135px" width="10" height="9" viewBox="0 0 10 9"><path d="M1.5 1.500l6.500 6M8 1.500l-6.500 6" stroke="#222" stroke-width="1.8"/></svg>
<div class="a" style="left:1128px;top:153px;width:150px;height:23px;background:#fff;border:1px solid #8e8e8e"></div>
<div class="a" style="left:1261px;top:156px;width:1px;height:17px;background:#9a9a9a;"></div>
<svg style="left:1264px;top:161px" width="12" height="8" viewBox="0 0 12 8"><path d="M1.500 1.500h8L5.500 6z" fill="#222"/></svg>
<div class="t " style="left:1132px;top:158.5px;font-size:12px;color:#000;">无选择</div>
<div class="a" style="left:1283px;top:151px;width:73px;height:25px;background:#f2f2f2;border:1px solid #4a4a4a"></div>
<div class="a" style="left:1307px;top:152px;width:1px;height:23px;background:#4a4a4a;"></div>
<div class="a" style="left:1331px;top:152px;width:1px;height:23px;background:#4a4a4a;"></div>
<svg style="left:1284px;top:152px" width="72" height="23" viewBox="0 0 72 23" fill="none">
<rect x="5.500" y="5.500" width="9" height="9" rx="1" stroke="#333"/><rect x="9.500" y="8.500" width="9" height="9" rx="1" stroke="#333" fill="#f2f2f2"/><path d="M14 10.500v5M11.500 13h5" stroke="#333"/>
<rect x="34.500" y="4.500" width="8" height="9" fill="#b8d4f4" stroke="#5a8fd0"/><path d="M36 9a5 5 0 1 0 3 9" stroke="#777" stroke-width="1.200"/><path d="M39.500 12.500l0 7 1.800-1.800 1.500 2.600 1-0.600-1.500-2.500 2.400-.2z" fill="#fff" stroke="#333" stroke-width=".8"/>
<path d="M53.500 5.500v9l2.500-2.500 2 3.500 1.200-.7-2-3.400h3.300z" fill="#fff" stroke="#333" stroke-width=".9"/><path d="M66 8l-4 5h3l-2.500 5 6-6.500h-3l2-3.500z" fill="#f5b62e"/>
</svg>
<svg style="left:1130px;top:187px" width="217" height="17" viewBox="0 0 217 17"><path d="M0 17V5l4-5h209l4 5v12z" fill="#343d48"/><path d="M201.500 7.500l4-3.500 4 3.500M201.500 12.500l4-3.500 4 3.500" fill="none" stroke="#fff" stroke-width="1.500"/></svg>
<div class="t " style="left:1137px;top:190.2px;font-size:12.5px;color:#fff;font-weight:700;letter-spacing:0.5px">一般</div>
<div class="a" style="left:1147px;top:204px;width:81px;height:17px;background:#f0f0f0;border-left:1px solid #a5a5a5;border-bottom:1px solid #a5a5a5"></div>
<div class="a" style="left:1228px;top:204px;width:119px;height:17px;background:#fff;border-left:1px solid #a5a5a5;border-right:1px solid #a5a5a5;border-bottom:1px solid #a5a5a5"></div>
<div class="t " style="left:1151px;top:206.5px;font-size:12px;color:#000;">颜色</div>
<div class="a" style="left:1232px;top:208px;width:10px;height:10px;background:#fff;border:1px solid #222"></div>
<div class="t " style="left:1247px;top:207px;font-size:11px;color:#000;">ByLayer</div>
<div class="a" style="left:1147px;top:221px;width:81px;height:17px;background:#f0f0f0;border-left:1px solid #a5a5a5;border-bottom:1px solid #a5a5a5"></div>
<div class="a" style="left:1228px;top:221px;width:119px;height:17px;background:#fff;border-left:1px solid #a5a5a5;border-right:1px solid #a5a5a5;border-bottom:1px solid #a5a5a5"></div>
<div class="t " style="left:1151px;top:223.5px;font-size:12px;color:#000;">层</div>
<div class="t " style="left:1231px;top:224px;font-size:11px;color:#000;">01</div>
<div class="a" style="left:1147px;top:238px;width:81px;height:17px;background:#f0f0f0;border-left:1px solid #a5a5a5;border-bottom:1px solid #a5a5a5"></div>
<div class="a" style="left:1228px;top:238px;width:119px;height:17px;background:#fff;border-left:1px solid #a5a5a5;border-right:1px solid #a5a5a5;border-bottom:1px solid #a5a5a5"></div>
<div class="t " style="left:1151px;top:240.5px;font-size:12px;color:#000;">线型</div>
<div class="a" style="left:1234px;top:247px;width:48px;height:1px;background:#222;"></div>
<div class="t " style="left:1286px;top:241px;font-size:11px;color:#000;">ByLayer</div>
<div class="a" style="left:1147px;top:255px;width:81px;height:17px;background:#f0f0f0;border-left:1px solid #a5a5a5;border-bottom:1px solid #a5a5a5"></div>
<div class="a" style="left:1228px;top:255px;width:119px;height:17px;background:#fff;border-left:1px solid #a5a5a5;border-right:1px solid #a5a5a5;border-bottom:1px solid #a5a5a5"></div>
<div class="t " style="left:1151px;top:257.5px;font-size:12px;color:#000;">线型比例</div>
<div class="t " style="left:1231px;top:258px;font-size:11px;color:#000;">1</div>
<div class="a" style="left:1147px;top:272px;width:81px;height:17px;background:#f0f0f0;border-left:1px solid #a5a5a5;border-bottom:1px solid #a5a5a5"></div>
<div class="a" style="left:1228px;top:272px;width:119px;height:17px;background:#fff;border-left:1px solid #a5a5a5;border-right:1px solid #a5a5a5;border-bottom:1px solid #a5a5a5"></div>
<div class="t " style="left:1151px;top:274.5px;font-size:12px;color:#000;">线宽</div>
<div class="a" style="left:1234px;top:281px;width:48px;height:1px;background:#222;"></div>
<div class="t " style="left:1286px;top:275px;font-size:11px;color:#000;">ByLayer</div>
<div class="a" style="left:1147px;top:289px;width:81px;height:17px;background:#f0f0f0;border-left:1px solid #a5a5a5;border-bottom:1px solid #a5a5a5"></div>
<div class="a" style="left:1228px;top:289px;width:119px;height:17px;background:#fff;border-left:1px solid #a5a5a5;border-right:1px solid #a5a5a5;border-bottom:1px solid #a5a5a5"></div>
<div class="t " style="left:1151px;top:291.5px;font-size:12px;color:#000;">厚度</div>
<div class="t " style="left:1231px;top:292px;font-size:11px;color:#000;">0</div>
<svg style="left:1130px;top:315px" width="217" height="17" viewBox="0 0 217 17"><path d="M0 17V5l4-5h209l4 5v12z" fill="#343d48"/><path d="M201.500 7.500l4-3.500 4 3.500M201.500 12.500l4-3.500 4 3.500" fill="none" stroke="#fff" stroke-width="1.500"/></svg>
<div class="t " style="left:1137px;top:318.2px;font-size:12.5px;color:#fff;font-weight:700;letter-spacing:0.5px">打印样式</div>
<div class="a" style="left:1147px;top:332px;width:81px;height:17px;background:#f0f0f0;border-left:1px solid #a5a5a5;border-bottom:1px solid #a5a5a5"></div>
<div class="a" style="left:1228px;top:332px;width:119px;height:17px;background:#f0f0f0;border-left:1px solid #a5a5a5;border-right:1px solid #a5a5a5;border-bottom:1px solid #a5a5a5"></div>
<div class="t " style="left:1151px;top:334.5px;font-size:12px;color:#000;">打印样式</div>
<div class="t " style="left:1231px;top:335px;font-size:11px;color:#000;">ByColor</div>
<div class="a" style="left:1147px;top:349px;width:81px;height:17px;background:#f0f0f0;border-left:1px solid #a5a5a5;border-bottom:1px solid #a5a5a5"></div>
<div class="a" style="left:1228px;top:349px;width:119px;height:17px;background:#fff;border-left:1px solid #a5a5a5;border-right:1px solid #a5a5a5;border-bottom:1px solid #a5a5a5"></div>
<div class="t " style="left:1151px;top:351.5px;font-size:12px;color:#000;">打印样式表</div>
<div class="t " style="left:1231px;top:352px;font-size:12px;color:#000;">无</div>
<div class="a" style="left:1147px;top:366px;width:81px;height:17px;background:#f0f0f0;border-left:1px solid #a5a5a5;border-bottom:1px solid #a5a5a5"></div>
<div class="a" style="left:1228px;top:366px;width:119px;height:17px;background:#f0f0f0;border-left:1px solid #a5a5a5;border-right:1px solid #a5a5a5;border-bottom:1px solid #a5a5a5"></div>
<div class="t " style="left:1151px;top:368.5px;font-size:12px;color:#000;">打印表附着到</div>
<div class="t " style="left:1231px;top:369px;font-size:12px;color:#000;">模型空间</div>
<div class="a" style="left:1147px;top:383px;width:81px;height:17px;background:#f0f0f0;border-left:1px solid #a5a5a5;border-bottom:1px solid #a5a5a5"></div>
<div class="a" style="left:1228px;top:383px;width:119px;height:17px;background:#f0f0f0;border-left:1px solid #a5a5a5;border-right:1px solid #a5a5a5;border-bottom:1px solid #a5a5a5"></div>
<div class="t " style="left:1151px;top:385.5px;font-size:12px;color:#000;">打印表类型</div>
<div class="t " style="left:1231px;top:386px;font-size:12px;color:#000;">不可用</div>
<svg style="left:1130px;top:408px" width="217" height="17" viewBox="0 0 217 17"><path d="M0 17V5l4-5h209l4 5v12z" fill="#343d48"/><path d="M201.500 7.500l4-3.500 4 3.500M201.500 12.500l4-3.500 4 3.500" fill="none" stroke="#fff" stroke-width="1.500"/></svg>
<div class="t " style="left:1137px;top:411.2px;font-size:12.5px;color:#fff;font-weight:700;letter-spacing:0.5px">视图</div>
<div class="a" style="left:1147px;top:425px;width:81px;height:17px;background:#f0f0f0;border-left:1px solid #a5a5a5;border-bottom:1px solid #a5a5a5"></div>
<div class="a" style="left:1228px;top:425px;width:119px;height:17px;background:#f0f0f0;border-left:1px solid #a5a5a5;border-right:1px solid #a5a5a5;border-bottom:1px solid #a5a5a5"></div>
<div class="t " style="left:1151px;top:427.5px;font-size:12px;color:#000;">圆心<span style="font-size:11px">X</span>坐标</div>
<div class="t " style="left:1231px;top:428px;font-size:11px;color:#000;">625.294</div>
<div class="a" style="left:1147px;top:442px;width:81px;height:17px;background:#f0f0f0;border-left:1px solid #a5a5a5;border-bottom:1px solid #a5a5a5"></div>
<div class="a" style="left:1228px;top:442px;width:119px;height:17px;background:#f0f0f0;border-left:1px solid #a5a5a5;border-right:1px solid #a5a5a5;border-bottom:1px solid #a5a5a5"></div>
<div class="t " style="left:1151px;top:444.5px;font-size:12px;color:#000;">圆心<span style="font-size:11px">Y</span>坐标</div>
<div class="t " style="left:1231px;top:445px;font-size:11px;color:#000;">272.812</div>
<div class="a" style="left:1147px;top:459px;width:81px;height:17px;background:#f0f0f0;border-left:1px solid #a5a5a5;border-bottom:1px solid #a5a5a5"></div>
<div class="a" style="left:1228px;top:459px;width:119px;height:17px;background:#f0f0f0;border-left:1px solid #a5a5a5;border-right:1px solid #a5a5a5;border-bottom:1px solid #a5a5a5"></div>
<div class="t " style="left:1151px;top:461.5px;font-size:12px;color:#000;">圆心<span style="font-size:11px">Z</span>坐标</div>
<div class="t " style="left:1231px;top:462px;font-size:11px;color:#000;">0</div>
<div class="a" style="left:1147px;top:476px;width:81px;height:17px;background:#f0f0f0;border-left:1px solid #a5a5a5;border-bottom:1px solid #a5a5a5"></div>
<div class="a" style="left:1228px;top:476px;width:119px;height:17px;background:#f0f0f0;border-left:1px solid #a5a5a5;border-right:1px solid #a5a5a5;border-bottom:1px solid #a5a5a5"></div>
<div class="t " style="left:1151px;top:478.5px;font-size:12px;color:#000;">高度</div>
<div class="t " style="left:1231px;top:479px;font-size:11px;color:#000;">699.444</div>
<div class="a" style="left:1147px;top:493px;width:81px;height:17px;background:#f0f0f0;border-left:1px solid #a5a5a5;border-bottom:1px solid #a5a5a5"></div>
<div class="a" style="left:1228px;top:493px;width:119px;height:17px;background:#f0f0f0;border-left:1px solid #a5a5a5;border-right:1px solid #a5a5a5;border-bottom:1px solid #a5a5a5"></div>
<div class="t " style="left:1151px;top:495.5px;font-size:12px;color:#000;">宽度</div>
<div class="t " style="left:1231px;top:496px;font-size:11px;color:#000;">1594.673</div>
<svg style="left:1130px;top:518px" width="217" height="17" viewBox="0 0 217 17"><path d="M0 17V5l4-5h209l4 5v12z" fill="#343d48"/><path d="M201.500 7.500l4-3.500 4 3.500M201.500 12.500l4-3.500 4 3.500" fill="none" stroke="#fff" stroke-width="1.500"/></svg>
<div class="t " style="left:1137px;top:521.2px;font-size:12.5px;color:#fff;font-weight:700;letter-spacing:0.5px">其他</div>
<div class="a" style="left:1147px;top:535px;width:81px;height:17px;background:#f0f0f0;border-left:1px solid #a5a5a5;border-bottom:1px solid #a5a5a5"></div>
<div class="a" style="left:1228px;top:535px;width:119px;height:17px;background:#fff;border-left:1px solid #a5a5a5;border-right:1px solid #a5a5a5;border-bottom:1px solid #a5a5a5"></div>
<div class="t " style="left:1151px;top:537.5px;font-size:12px;color:#000;">打开<span style="font-size:11px;letter-spacing:-.3px"> UCS </span>图标</div>
<div class="t " style="left:1231px;top:538px;font-size:12px;color:#000;">是</div>
<div class="a" style="left:1147px;top:552px;width:81px;height:17px;background:#f0f0f0;border-left:1px solid #a5a5a5;border-bottom:1px solid #a5a5a5"></div>
<div class="a" style="left:1228px;top:552px;width:119px;height:17px;background:#fff;border-left:1px solid #a5a5a5;border-right:1px solid #a5a5a5;border-bottom:1px solid #a5a5a5"></div>
<div class="t " style="left:1151px;top:554.5px;font-size:12px;color:#000;">在原点显示<span style="letter-spacing:-.5px"> ...</span></div>
<div class="t " style="left:1231px;top:555px;font-size:12px;color:#000;">否</div>
<div class="a" style="left:1147px;top:569px;width:81px;height:17px;background:#f0f0f0;border-left:1px solid #a5a5a5;border-bottom:1px solid #a5a5a5"></div>
<div class="a" style="left:1228px;top:569px;width:119px;height:17px;background:#fff;border-left:1px solid #a5a5a5;border-right:1px solid #a5a5a5;border-bottom:1px solid #a5a5a5"></div>
<div class="t " style="left:1151px;top:571.5px;font-size:12px;color:#000;">显示<span style="font-size:11px;letter-spacing:-.3px">UCS</span></div>
<div class="t " style="left:1231px;top:572px;font-size:12px;color:#000;">是</div>
<div class="a" style="left:1131px;top:594px;width:217px;height:32px;background:#f0f0f0;border:1px solid #a8a8a8"></div>
<div class="a" style="left:1356px;top:187px;width:10px;height:400px;background:#fff;"></div>
<div class="a" style="left:1356px;top:187px;width:10px;height:11px;background:#dcdcdc;"></div>
<div class="a" style="left:1356px;top:198px;width:10px;height:358px;background:#6e6e6e;"></div>
<div class="a" style="left:1356px;top:576px;width:10px;height:11px;background:#dcdcdc;"></div>
<svg style="left:1356px;top:187px" width="10" height="400" viewBox="0 0 10 400" fill="none" stroke="#222" stroke-width="1.600"><path d="M1.500 7.500L5 4l3.500 3.500M1.500 392.500L5 396l3.500-3.500"/></svg>
<svg style="left:6px;top:647px" width="10" height="10" viewBox="0 0 10 10"><path d="M1.500 2l6 6M7.500 2l-6 6" stroke="#333" stroke-width="1.700"/><path d="M1 2.500h2M6 2.500h2M1 8h2M6 8h2" stroke="#333" stroke-width="1"/></svg>
<div class="a" style="left:6px;top:662px;width:1px;height:38px;background:#a8a8a8;"></div>
<div class="a" style="left:7px;top:662px;width:1px;height:38px;background:#e4e4e4;"></div>
<div class="a" style="left:11px;top:662px;width:1px;height:38px;background:#a8a8a8;"></div>
<div class="a" style="left:12px;top:662px;width:1px;height:38px;background:#e4e4e4;"></div>
<div class="t serif" style="left:18px;top:647.5px;font-size:12px;color:#000;"><span style="letter-spacing:2px;font-weight:500">命令</span></div>
<div class="t mono" style="left:46px;top:647.0px;font-size:13px;color:#000;font-weight:700">:</div>
<div class="t serif" style="left:18px;top:663.5px;font-size:12px;color:#000;"><span style="letter-spacing:2px;font-weight:500">命令</span></div>
<div class="t mono" style="left:46px;top:663.0px;font-size:13px;color:#000;font-weight:700">:</div>
<div class="t mono" style="left:60px;top:663.0px;font-size:12px;color:#000;letter-spacing:-0.2px">_open</div>
<div class="t serif" style="left:18px;top:688px;font-size:12px;color:#000;"><span style="letter-spacing:2px;font-weight:500">命令</span></div>
<div class="t mono" style="left:46px;top:687.5px;font-size:13px;color:#000;font-weight:700">:</div>
<div class="a" style="left:18px;top:684px;width:1324px;height:1px;background:#8c8c8c;"></div>
<div class="a" style="left:1341px;top:646px;width:17px;height:38px;background:#fff;border:1px solid #8a8a8a"></div>
<div class="a" style="left:1342px;top:650px;width:15px;height:1px;background:#b0b0b0;"></div>
<div class="a" style="left:1342px;top:666px;width:15px;height:1px;background:#8a8a8a;"></div>
<svg style="left:1344px;top:672px" width="12" height="8" viewBox="0 0 12 8"><path d="M1 1.500h9L5.500 6.500z" fill="#111"/></svg>
<svg style="left:1270px;top:685px" width="90" height="19" viewBox="0 0 90 19">
<rect x="8.500" y="1.500" width="14" height="14" fill="none" stroke="#9a9a9a" stroke-dasharray="3 2"/>
<path d="M17 4.500v7l-4.500-3.500z" fill="#111"/>
<path d="M35 1h14v9l-7 4-7-4z" fill="#c4c4c4"/>
<rect x="53.500" y="1.500" width="14" height="14" fill="none" stroke="#9a9a9a" stroke-dasharray="3 2"/>
<path d="M57 11l5-5 1.500 1.500z" fill="#111"/>
</svg>
<svg style="left:1190px;top:668px" width="80" height="56" viewBox="0 0 80 56">
<path d="M4 36l22-8 10-12 8-10 10 14-6 3 14 8-10 6-8-3-6 4 12 2-6 8-14 2-10-4-8 2 4-8z" fill="#fff" opacity=".92"/>
</svg>
<div class="t " style="left:1262px;top:683px;font-size:21px;color:#fff;font-weight:700;letter-spacing:5px">系统之家</div>
<div class="t mono" style="left:7px;top:713.5px;font-size:11px;color:#111;letter-spacing:-0.6px">1378.582, 263.864, 0.000</div>
<div class="a" style="left:1060px;top:45px;width:1px;height:27px;background:#e3e6ea;"></div>
<div class="a" style="left:1078px;top:73px;width:1px;height:27px;background:#e3e6ea;"></div>
<div class="a" style="left:1269px;top:101px;width:1px;height:27px;background:#e3e6ea;"></div>
<div class="a" style="left:2px;top:47px;width:2px;height:22px;background:#6fa5d8;"></div>
<div class="a" style="left:5px;top:47px;width:1px;height:22px;background:#6fa5d8;"></div>
<svg style="left:15px;top:49.5px" width="18" height="18" viewBox="0 0 18 18" fill="none"><path d="M3 8.500v6.500h13.500V8L12.500 4H8.500" stroke="#222" stroke-width="1.300"/><path d="M12.500 4v4h4" stroke="#222" stroke-width="1.100"/><path d="M4 1.500v6M1 4.500h6" stroke="#2e9a63" stroke-width="1.800"/></svg>
<svg style="left:38px;top:49.5px" width="18" height="18" viewBox="0 0 18 18" fill="none"><path d="M2 4.500a1 1 0 0 1 1-1h4l1.500 2H15a1 1 0 0 1 1 1V15H2z" fill="#f6c765"/><path d="M2 8h14v7H2z" fill="#e5a32a"/></svg>
<svg style="left:61px;top:49.5px" width="18" height="18" viewBox="0 0 18 18" fill="none"><path d="M3 3.500h12v12H3z" fill="#4f8fd6"/><path d="M4.500 4.500h9v5h-9z" fill="#b7d5f6"/><path d="M6.500 11.500h5v4h-5z" fill="#fff"/></svg>
<div class="a" style="left:85px;top:49px;width:1px;height:20px;background:#c6c6c6;"></div>
<svg style="left:89px;top:49.5px" width="18" height="18" viewBox="0 0 18 18" fill="none"><path d="M5.500 3.500h7v4h-7z" fill="#fff" stroke="#4f81b8"/><path d="M2 7.500a1.500 1.500 0 0 1 1.500-1.500h11A1.500 1.500 0 0 1 16 7.500V13H2z" fill="#4f81b8"/><path d="M5.500 10.500h7v5h-7z" fill="#fff" stroke="#555"/><path d="M7 13h2.500" stroke="#333" stroke-width="1.200"/></svg>
<svg style="left:112.5px;top:49.5px" width="18" height="18" viewBox="0 0 18 18" fill="none"><path d="M2.500 2.500h10v12h-10z" stroke="#5a8dc4"/><path d="M2.500 6.500h10M6.500 2.500v12" stroke="#5a8dc4"/><path d="M6.500 5.500h4v4h-4z" fill="#c5dcf5" stroke="#5a8dc4"/><circle cx="11.500" cy="12" r="2.800" fill="#fff" stroke="#666" stroke-width="1.200"/><path d="M13.500 14l3 3" stroke="#666" stroke-width="1.600"/></svg>
<svg style="left:136px;top:49.5px" width="18" height="18" viewBox="0 0 18 18" fill="none"><path d="M5.500 2.500h7v4h-7z" fill="#fff" stroke="#4f81b8"/><path d="M2 7a1.500 1.500 0 0 1 1.500-1.500h11A1.500 1.500 0 0 1 16 7v5H2z" fill="#4f81b8"/><path d="M5.500 9.500h6v5h-6z" fill="#fff" stroke="#777"/><path d="M8.500 14h7" stroke="#2f9a62" stroke-width="1.800"/><path d="M13 11l3.200 3-3.200 3" stroke="#2f9a62" stroke-width="1.700"/></svg>
<div class="a" style="left:159px;top:49px;width:1px;height:20px;background:#c6c6c6;"></div>
<svg style="left:164.5px;top:49.5px" width="18" height="18" viewBox="0 0 18 18" fill="none"><path d="M5 1.500l6.500 10M13 1.500L6.500 11.500" stroke="#222" stroke-width="1.600"/><circle cx="5" cy="13.500" r="2.300" stroke="#4a7fb5" stroke-width="1.300"/><circle cx="13" cy="13.500" r="2.300" stroke="#4a7fb5" stroke-width="1.300"/></svg>
<svg style="left:187.5px;top:49.5px" width="18" height="18" viewBox="0 0 18 18" fill="none"><path d="M7 11.500H2.500v-9h6v2" stroke="#222" stroke-width="1.300"/><path d="M7.500 6.500h5l3 3v7h-8z" fill="#fff" stroke="#222" stroke-width="1.300"/><path d="M12.500 6.500v3h3" stroke="#222"/></svg>
<svg style="left:211px;top:49.5px" width="18" height="18" viewBox="0 0 18 18" fill="none"><path d="M2.500 3.500h11v12h-11z" fill="#efcf8a"/><path d="M5.500 3.500v-1.500h5v1.500M7 1.500h2" stroke="#333" stroke-width="1.500"/><path d="M9.500 8.500h4l2 2v6h-6z" fill="#fff" stroke="#222" stroke-width="1.200"/></svg>
<svg style="left:234.5px;top:49.5px" width="18" height="18" viewBox="0 0 18 18" fill="none"><path d="M10 7l5-5 1.500 1.500-5 5z" fill="#555"/><path d="M2 11l6-5 4.500 4.500-5 6z" fill="#4f8fd6"/><path d="M7.500 6.500l4.500 4.500" stroke="#9cc3ee" stroke-width="1.500"/></svg>
<div class="a" style="left:257.5px;top:49px;width:1px;height:20px;background:#c6c6c6;"></div>
<svg style="left:262.5px;top:49.5px" width="18" height="18" viewBox="0 0 18 18" fill="none"><path d="M4 6.500h6.500a4 4 0 0 1 0 8H8" stroke="#3f7db8" stroke-width="2.200"/><path d="M7.500 2.500L3.500 6.500l4 4" stroke="#3f7db8" stroke-width="2.200"/></svg>
<svg style="left:287px;top:58px" width="7" height="5" viewBox="0 0 7 5"><path d="M0.500 0.500h6L3.500 4z" fill="#222"/></svg>
<svg style="left:299px;top:49.5px" width="18" height="18" viewBox="0 0 18 18" fill="none"><path d="M14 6.500H7.500a4 4 0 0 0 0 8H10" stroke="#c4c4c4" stroke-width="2.200"/><path d="M10.500 2.500l4 4-4 4" stroke="#c4c4c4" stroke-width="2.200"/></svg>
<svg style="left:324px;top:58px" width="7" height="5" viewBox="0 0 7 5"><path d="M0.500 0.500h6L3.500 4z" fill="#c0c0c0"/></svg>
<div class="a" style="left:336px;top:49px;width:1px;height:20px;background:#c6c6c6;"></div>
<svg style="left:341px;top:49.5px" width="18" height="18" viewBox="0 0 18 18" fill="none"><path d="M5 9V4.500a1 1 0 0 1 2 0V8 3a1 1 0 0 1 2 0v5-4.500a1 1 0 0 1 2 0V8.500 5.500a1 1 0 0 1 2 0V12c0 3-1.500 4.500-4.500 4.500S4.500 15 3.500 12.500L2.500 10c0-1 1.500-1.500 2.500 0z" fill="#fff" stroke="#222" stroke-width="1.100"/></svg>
<svg style="left:363.5px;top:49.5px" width="18" height="18" viewBox="0 0 18 18" fill="none"><path d="M9.500 9a4 4 0 1 1 2-5" stroke="#8b9096" stroke-width="1.200"/><path d="M6.500 3v3.500H9" stroke="#8b9096" stroke-width="1.200"/><circle cx="10.500" cy="10.500" r="3" fill="#fff" stroke="#777" stroke-width="1.300"/><path d="M12.800 12.800l3.500 3.500" stroke="#777" stroke-width="1.700"/></svg>
<svg style="left:386px;top:49.5px" width="18" height="18" viewBox="0 0 18 18" fill="none"><path d="M2.500 10.500v-8h10v4" stroke="#333" stroke-width="1.300"/><path d="M2.500 2.500h10" stroke="#4f81b8" stroke-width="1.600"/><circle cx="9.500" cy="10.500" r="3" fill="#fff" stroke="#777" stroke-width="1.300"/><path d="M11.800 12.800l2.500 2.500" stroke="#777" stroke-width="1.600"/><path d="M17 13v4h-4z" fill="#111"/></svg>
<svg style="left:409px;top:49.5px" width="18" height="18" viewBox="0 0 18 18" fill="none"><path d="M2 4.500h8" stroke="#3d9a72" stroke-width="2"/><path d="M5.500 1L2 4.500 5.500 8" stroke="#3d9a72" stroke-width="1.800"/><circle cx="10.500" cy="10.500" r="3" fill="#fff" stroke="#777" stroke-width="1.300"/><path d="M12.800 12.800l3.500 3.500" stroke="#777" stroke-width="1.700"/></svg>
<div class="a" style="left:434px;top:49px;width:1px;height:20px;background:#c6c6c6;"></div>
<svg style="left:438.5px;top:49.5px" width="18" height="18" viewBox="0 0 18 18" fill="none"><path d="M3.500 2.500h11v14h-11z" fill="#fff" stroke="#333" stroke-width="1.200"/><path d="M5 4.500h8" stroke="#666" stroke-width="1.400"/><path d="M5 7.500h8M5 10h8M5 12.500h8M5 15h8" stroke="#999" stroke-width="1.200" stroke-dasharray="1.500 1"/></svg>
<svg style="left:461.5px;top:49.5px" width="18" height="18" viewBox="0 0 18 18" fill="none"><path d="M2.500 2.500h14v13h-14z" fill="#fff" stroke="#333" stroke-width="1.200"/><path d="M8.500 2.500v13" stroke="#333" stroke-width="1.200"/><path d="M4 5h3M4 8h2M4 11h2" stroke="#555"/><path d="M10 5.500h2M13 5.500h2M10 9h2M13 9h2" stroke="#999" stroke-width="2"/></svg>
<svg style="left:484.5px;top:49.5px" width="18" height="18" viewBox="0 0 18 18" fill="none"><path d="M3.500 2.500h11l-1 2v11h-10z" fill="#fff" stroke="#333" stroke-width="1.200"/><path d="M3.500 2.500v13" stroke="#4f81b8" stroke-width="1.600"/><path d="M6 5.500h6M6 8h6M6 10.500h6M6 13h6" stroke="#777"/></svg>
<div class="a" style="left:507.5px;top:49px;width:1px;height:20px;background:#c6c6c6;"></div>
<svg style="left:513.5px;top:49.5px" width="18" height="18" viewBox="0 0 18 18" fill="none"><circle cx="9" cy="9" r="7.200" fill="#4a8ad4"/><text x="9" y="13" font-family="Liberation Sans,sans-serif" font-size="11" font-weight="700" fill="#fff" text-anchor="middle">?</text></svg>
<div class="a" style="left:539px;top:47px;width:2px;height:22px;background:#6fa5d8;"></div>
<div class="a" style="left:542px;top:47px;width:1px;height:22px;background:#6fa5d8;"></div>
<svg style="left:553px;top:49.5px" width="18" height="18" viewBox="0 0 18 18" fill="none"><path d="M2.500 14L7 2.500h1.500L13 14M4.500 10h6.500" stroke="#4a7fb5" stroke-width="1.500"/><path d="M9 16.500l3-1 5-6-1.500-1.200-5.500 5.500z" fill="#777"/></svg>
<div class="a" style="left:573px;top:48px;width:100px;height:22px;background:#fff;border:1px solid #8d949c"></div>
<div class="a" style="left:657px;top:49px;width:15px;height:20px;background:#eef2f8;"></div>
<div class="a" style="left:656px;top:51px;width:1px;height:16px;background:#7a828b;"></div>
<svg style="left:660px;top:56.5px" width="9" height="6" viewBox="0 0 9 6"><path d="M0.500 0.500h8L4.500 5z" fill="#111"/></svg>
<div class="t serif" style="left:578px;top:52.5px;font-size:12px;color:#111;letter-spacing:0.65px">Standard</div>
<div class="a" style="left:676.5px;top:49px;width:1px;height:20px;background:#c6c6c6;"></div>
<svg style="left:681px;top:49.5px" width="18" height="18" viewBox="0 0 18 18" fill="none"><path d="M2 2v14M16 2v6" stroke="#333" stroke-width="1.200"/><path d="M2.500 5h13" stroke="#4a7fb5" stroke-width="1.200"/><path d="M5 3l-2.500 2L5 7M13 3l2.500 2L13 7" stroke="#4a7fb5"/><path d="M8 16.500l3-1 5.500-6.500-1.500-1.200-5.500 6z" fill="#777"/></svg>
<div class="a" style="left:702px;top:48px;width:100px;height:22px;background:#fff;border:1px solid #8d949c"></div>
<div class="a" style="left:786px;top:49px;width:15px;height:20px;background:#eef2f8;"></div>
<div class="a" style="left:785px;top:51px;width:1px;height:16px;background:#7a828b;"></div>
<svg style="left:789px;top:56.5px" width="9" height="6" viewBox="0 0 9 6"><path d="M0.500 0.500h8L4.500 5z" fill="#111"/></svg>
<div class="t serif" style="left:707px;top:52.5px;font-size:12px;color:#111;letter-spacing:-0.8px">INTE</div>
<div class="a" style="left:806px;top:49px;width:1px;height:20px;background:#c6c6c6;"></div>
<svg style="left:809px;top:49.5px" width="18" height="18" viewBox="0 0 18 18" fill="none"><path d="M2.500 2.500h13v13h-13z" fill="#fff" stroke="#444"/><path d="M2.500 2.500h13v3h-13z" fill="#4a7fb5"/><path d="M2.500 9h13M2.500 12.500h13M7 5.500v10M11.500 5.500v10" stroke="#666"/><path d="M9 17l3-1 5-6-1.500-1.200-5.500 5.500z" fill="#777"/></svg>
<div class="a" style="left:831px;top:48px;width:100px;height:22px;background:#fff;border:1px solid #8d949c"></div>
<div class="a" style="left:915px;top:49px;width:15px;height:20px;background:#eef2f8;"></div>
<div class="a" style="left:914px;top:51px;width:1px;height:16px;background:#7a828b;"></div>
<svg style="left:918px;top:56.5px" width="9" height="6" viewBox="0 0 9 6"><path d="M0.500 0.500h8L4.500 5z" fill="#111"/></svg>
<div class="t serif" style="left:836px;top:52.5px;font-size:12px;color:#111;letter-spacing:0.65px">Standard</div>
<div class="a" style="left:935px;top:49px;width:1px;height:20px;background:#c6c6c6;"></div>
<svg style="left:939px;top:49.5px" width="18" height="18" viewBox="0 0 18 18" fill="none"><path d="M2 15L8 3.500h8.500" stroke="#333" stroke-width="1.300"/><path d="M2 15l1-4M2 15l3.500-2" stroke="#333"/><path d="M8 16.500l3-1 5.500-6.500-1.500-1.200-5.500 6z" fill="#777"/></svg>
<div class="a" style="left:960px;top:48px;width:100px;height:22px;background:#fff;border:1px solid #8d949c"></div>
<div class="a" style="left:1044px;top:49px;width:15px;height:20px;background:#eef2f8;"></div>
<div class="a" style="left:1043px;top:51px;width:1px;height:16px;background:#7a828b;"></div>
<svg style="left:1047px;top:56.5px" width="9" height="6" viewBox="0 0 9 6"><path d="M0.500 0.500h8L4.500 5z" fill="#111"/></svg>
<div class="t serif" style="left:965px;top:52.5px;font-size:12px;color:#111;letter-spacing:0.65px">Standard</div>
<div class="a" style="left:2px;top:75px;width:2px;height:22px;background:#6fa5d8;"></div>
<div class="a" style="left:5px;top:75px;width:1px;height:22px;background:#6fa5d8;"></div>
<svg style="left:13.5px;top:78px" width="18" height="18" viewBox="0 0 18 18" fill="none"><path d="M4 2.500h9l2.500 4H2z" fill="#fff" stroke="#333" stroke-width="1.200"/><path d="M2.500 9.500h9M2.500 12.500h7" stroke="#333" stroke-width="1.400"/><path d="M10.500 9.500h6v7h-6z" fill="#d4e6f8" stroke="#4a7fb5"/><path d="M12 12h3M12 14h3" stroke="#4a7fb5"/></svg>
<div class="a" style="left:36px;top:76px;width:300px;height:22px;background:#fff;border:1px solid #8d949c"></div>
<div class="a" style="left:320px;top:77px;width:15px;height:20px;background:#eef2f8;"></div>
<div class="a" style="left:319px;top:80px;width:1px;height:15px;background:#7a828b;"></div>
<svg style="left:323px;top:84px" width="9" height="6" viewBox="0 0 9 6"><path d="M0.500 0.500h8L4.500 5z" fill="#111"/></svg>
<svg style="left:37.5px;top:77.5px" width="18" height="18" viewBox="0 0 18 18" fill="none"><path d="M9 2a4.800 4.800 0 0 1 3 8.600V12H6v-1.400A4.800 4.800 0 0 1 9 2z" fill="#f7c52e"/><path d="M6 12.500h6l-1.500 2h-3z" fill="#222"/><path d="M7.500 15.500h3" stroke="#222" stroke-width="1.200"/></svg>
<svg style="left:54.5px;top:77.5px" width="18" height="18" viewBox="0 0 18 18" fill="none"><circle cx="9" cy="9" r="3.800" fill="#f0a020"/><path d="M9 2.500l1.500 2h-3zM9 15.500l1.500-2h-3zM2.500 9l2-1.500v3zM15.500 9l-2-1.500v3zM4.400 4.400l2.500.4-2.100 2.100zM13.600 4.400l-.4 2.500-2.100-2.100zM4.400 13.600l.4-2.500 2.100 2.100zM13.600 13.600l-2.500-.4 2.100-2.100z" fill="#f3b845"/></svg>
<svg style="left:71px;top:77.5px" width="18" height="18" viewBox="0 0 18 18" fill="none"><path d="M8 3.500h7.500v12H5.500V9" stroke="#333" stroke-width="1.200"/><path d="M5 1v7M1.500 4.500h7M2.500 2l5 5M7.500 2l-5 5" stroke="#4a86c5" stroke-width="1" stroke-dasharray="1.500 .8"/></svg>
<svg style="left:88px;top:77.5px" width="18" height="18" viewBox="0 0 18 18" fill="none"><path d="M9.500 7V4.500a3 3 0 0 1 6 0V6" stroke="#f0c040" stroke-width="1.500"/><path d="M3.500 7.500h9.500v8H3.500z" fill="#f3c02c"/><path d="M8.200 10v3.500" stroke="#fff" stroke-width="1.800"/></svg>
<div class="a" style="left:107px;top:82px;width:10px;height:10px;background:#fff;border:1px solid #111"></div>
<div class="t " style="left:121.5px;top:81.5px;font-size:11px;color:#111;">01</div>
<svg style="left:337.5px;top:78px" width="18" height="18" viewBox="0 0 18 18" fill="none"><path d="M5 4.500h8l2.500 4.500v6.500h-13V9z" fill="#fff" stroke="#333" stroke-width="1.100"/><path d="M2.500 9.200h13M2.500 12.400h13" stroke="#333" stroke-width="1.200"/><circle cx="7" cy="4.500" r="2.600" fill="#fff" stroke="#666"/></svg>
<svg style="left:360.5px;top:78px" width="18" height="18" viewBox="0 0 18 18" fill="none"><path d="M5 4.500h8l2.500 4.500v6.500h-13V9z" fill="#fff" stroke="#333" stroke-width="1.100"/><path d="M2.500 9.200h13M2.500 12.400h13" stroke="#333" stroke-width="1.200"/><path d="M3 3.500h7.500a2 2 0 0 1 2 2V7" stroke="#3d9a72" stroke-width="1.600"/><path d="M6 0.500l-3 3 3 3" stroke="#3d9a72" stroke-width="1.500"/></svg>
<svg style="left:384px;top:78px" width="18" height="18" viewBox="0 0 18 18" fill="none"><path d="M4 2.500h9l2.500 4H2z" fill="#fff" stroke="#333" stroke-width="1.200"/><path d="M2.500 9.500h7M2.500 12.500h6" stroke="#333" stroke-width="1.400"/><path d="M9.500 9.500h7v7h-7z" fill="#e3eefa" stroke="#4a7fb5"/><path d="M9.500 10h7" stroke="#4a7fb5" stroke-width="2"/><path d="M11.500 13.500h1.500M14 13.500h1.500M11.500 15h1.500M14 15h1.500" stroke="#4a7fb5"/></svg>
<div class="a" style="left:409px;top:75px;width:2px;height:22px;background:#6fa5d8;"></div>
<div class="a" style="left:412px;top:75px;width:1px;height:22px;background:#6fa5d8;"></div>
<div class="a" style="left:420px;top:76px;width:150px;height:22px;background:#fff;border:1px solid #8d949c"></div>
<div class="a" style="left:554px;top:77px;width:15px;height:20px;background:#eef2f8;"></div>
<div class="a" style="left:553px;top:79px;width:1px;height:16px;background:#7a828b;"></div>
<svg style="left:557px;top:84.5px" width="9" height="6" viewBox="0 0 9 6"><path d="M0.500 0.500h8L4.500 5z" fill="#111"/></svg>
<div class="a" style="left:425px;top:82.0px;width:10px;height:10px;background:#fff;border:1px solid #111"></div>
<div class="t serif" style="left:439px;top:80.5px;font-size:12px;color:#111;letter-spacing:0px">ByLayer</div>
<div class="a" style="left:573px;top:77px;width:1px;height:20px;background:#c6c6c6;"></div>
<div class="a" style="left:576px;top:76px;width:160px;height:22px;background:#fff;border:1px solid #8d949c"></div>
<div class="a" style="left:720px;top:77px;width:15px;height:20px;background:#eef2f8;"></div>
<div class="a" style="left:719px;top:79px;width:1px;height:16px;background:#7a828b;"></div>
<svg style="left:723px;top:84.5px" width="9" height="6" viewBox="0 0 9 6"><path d="M0.500 0.500h8L4.500 5z" fill="#111"/></svg>
<div class="a" style="left:581px;top:87.0px;width:60px;height:1px;background:#111;"></div>
<div class="t serif" style="left:646px;top:80.5px;font-size:12px;color:#111;letter-spacing:0px">ByLayer</div>
<div class="a" style="left:739px;top:77px;width:1px;height:20px;background:#c6c6c6;"></div>
<div class="a" style="left:742px;top:76px;width:124px;height:22px;background:#fff;border:1px solid #8d949c"></div>
<div class="a" style="left:850px;top:77px;width:15px;height:20px;background:#eef2f8;"></div>
<div class="a" style="left:849px;top:79px;width:1px;height:16px;background:#7a828b;"></div>
<svg style="left:853px;top:84.5px" width="9" height="6" viewBox="0 0 9 6"><path d="M0.500 0.500h8L4.500 5z" fill="#111"/></svg>
<div class="a" style="left:747px;top:87.0px;width:34px;height:1px;background:#111;"></div>
<div class="t serif" style="left:786px;top:80.5px;font-size:12px;color:#111;letter-spacing:0px">ByLayer</div>
<div class="a" style="left:869px;top:77px;width:1px;height:20px;background:#c6c6c6;"></div>
<div class="a" style="left:873px;top:76px;width:119px;height:22px;background:#fff;border:1px solid #c8c8c8"></div>
<div class="a" style="left:976px;top:77px;width:15px;height:20px;background:#e4e4e4;"></div>
<div class="a" style="left:975px;top:79px;width:1px;height:16px;background:#bcbcbc;"></div>
<svg style="left:979px;top:84.5px" width="9" height="6" viewBox="0 0 9 6"><path d="M0.500 0.500h8L4.500 5z" fill="#9a9a9a"/></svg>
<div class="t serif" style="left:882px;top:80.5px;font-size:12px;color:#a6a6a6;letter-spacing:0.1px">ByColor</div>
<div class="a" style="left:997px;top:75px;width:2px;height:22px;background:#6fa5d8;"></div>
<div class="a" style="left:1000px;top:75px;width:1px;height:22px;background:#6fa5d8;"></div>
<svg style="left:1010px;top:78px" width="18" height="18" viewBox="0 0 18 18" fill="none"><path d="M5.500 2.500h-3v12h3" stroke="#222" stroke-width="1.200" stroke-dasharray="2 1.200"/><path d="M4 1l2 1.500L4 4M4 13l2 1.500L4 16" stroke="#222"/><text x="11.500" y="11.500" font-family="Liberation Mono,monospace" font-size="6.500" font-weight="700" fill="#222" text-anchor="middle">A-A</text></svg>
<svg style="left:1032.5px;top:78px" width="18" height="18" viewBox="0 0 18 18" fill="none"><path d="M3 6l11 9" stroke="#222" stroke-width="1.200"/><path d="M15.500 16l-4.200-1.200 2-2.400z" fill="#222"/><text x="8.500" y="6.500" font-family="Liberation Sans,sans-serif" font-size="6.500" font-weight="700" fill="#222" text-anchor="middle">A</text></svg>
<svg style="left:1055.5px;top:78px" width="18" height="18" viewBox="0 0 18 18" fill="none"><path d="M10 2.600A7 7 0 1 1 2.600 8" stroke="#222" stroke-width="1.200"/><path d="M12 1l-2.500 1.600L12 4.500" stroke="#222"/><path d="M7.500 16v-6h2v6M11.500 16V8.500h3V13" stroke="#222" stroke-width="1.100"/><text x="5" y="6.500" font-family="Liberation Sans,sans-serif" font-size="6.500" font-weight="700" fill="#222" text-anchor="middle">A</text></svg>
<div class="a" style="left:2px;top:103px;width:2px;height:22px;background:#6fa5d8;"></div>
<div class="a" style="left:5px;top:103px;width:1px;height:22px;background:#6fa5d8;"></div>
<svg style="left:14.5px;top:106px" width="18" height="18" viewBox="0 0 18 18" fill="none"><path d="M3.500 5.500h12v10h-12z" fill="#c9dcf4" stroke="#6c9bd2"/><path d="M3.500 11h12M10 5.500v10" stroke="#fff"/><circle cx="5" cy="5" r="3.500" fill="#f5b52e"/><circle cx="5" cy="5" r="1.300" fill="none" stroke="#d08a10"/></svg>
<svg style="left:37.5px;top:106px" width="18" height="18" viewBox="0 0 18 18" fill="none"><path d="M2.500 2.500h14v14h-14z" fill="#dfeaf8" stroke="#5d8cc6"/><path d="M9 6h6v3H9z" fill="#3d6fb5"/><path d="M8 11.500h7v3H8z" fill="#fff" stroke="#5d8cc6"/><path d="M3 7.500h6M6 4.500v6M4 5.500l4 4M8 5.500l-4 4" stroke="#f2b92a" stroke-width="1.300"/></svg>
<svg style="left:60px;top:106px" width="18" height="18" viewBox="0 0 18 18" fill="none"><circle cx="11" cy="7" r="4.800" fill="#fff" stroke="#555" stroke-width="1.100"/><path d="M7.500 10.500L2.500 15.500" stroke="#555" stroke-width="1.300"/><path d="M2 13.500v2.500h2.500" stroke="#3a6ea8" stroke-width="1.200"/><text x="11" y="10" font-family="Liberation Sans,sans-serif" font-size="7.500" font-weight="700" fill="#333" text-anchor="middle">1</text></svg>
<div class="a" style="left:83px;top:105px;width:1px;height:20px;background:#c6c6c6;"></div>
<svg style="left:89.5px;top:106px" width="18" height="18" viewBox="0 0 18 18" fill="none"><path d="M3 4l6-2.500-1 3.500 4-.5-6 6 1-3.500-4.500 1z" fill="#f3bf35" stroke="#e0a020" stroke-width=".8"/><path d="M6 14.500l8.500-7 2.500 3-8.500 7-3 .5z" fill="#eeb32c"/><path d="M6.500 14l2.500 3" stroke="#b98010"/></svg>
<div class="a" style="left:113px;top:105px;width:1px;height:20px;background:#c6c6c6;"></div>
<svg style="left:118.5px;top:106px" width="18" height="18" viewBox="0 0 18 18" fill="none"><path d="M2.500 2v14M15.500 2v14" stroke="#222" stroke-width="1.300"/><circle cx="9" cy="7.500" r="3.800" stroke="#777"/><path d="M3 7.500h12" stroke="#4a7fb5" stroke-width="1.200"/><path d="M5.500 5.500l-2.500 2 2.500 2M12.500 5.500l2.500 2-2.500 2" stroke="#4a7fb5"/><path d="M9 11.500l4 4.500h2.500" stroke="#555"/></svg>
<svg style="left:141.5px;top:106px" width="18" height="18" viewBox="0 0 18 18" fill="none"><path d="M2.500 9.500h6.500" stroke="#222" stroke-width="1.200"/><path d="M2.500 9.500L7 14l9.500-6" stroke="#222" stroke-width="1.300"/><text x="7.500" y="7.500" font-family="Liberation Sans,sans-serif" font-size="6.500" font-weight="700" fill="#3c5f86" text-anchor="middle">3.2</text><path d="M3.500 8h8" stroke="#3c5f86" stroke-width=".8"/></svg>
<svg style="left:164.5px;top:106px" width="18" height="18" viewBox="0 0 18 18" fill="none"><path d="M2.500 5.500h13v8h-13z" fill="#a9c3e6" stroke="#222" stroke-width="1.300"/><path d="M9 5.500v8" stroke="#222" stroke-width="1.300"/><text x="5.800" y="12" font-family="Liberation Sans,sans-serif" font-size="6.500" fill="#47698f" text-anchor="middle">0</text><text x="12.300" y="12" font-family="Liberation Sans,sans-serif" font-size="6.500" fill="#47698f" text-anchor="middle">0</text></svg>
<svg style="left:187.5px;top:106px" width="18" height="18" viewBox="0 0 18 18" fill="none"><path d="M2.500 15.500l3.500-8.500h10.500" stroke="#222" stroke-width="1.300"/><path d="M8 5.500l3.500-3.500 3.500 3.500M8 9.500h8" stroke="#f0c030" stroke-width="1"/></svg>
<div class="t mono" style="left:212px;top:110.500px;font-size:9px;color:#5f968a;letter-spacing:-0.2px">TeXt</div>
<svg style="left:234.5px;top:106px" width="18" height="18" viewBox="0 0 18 18" fill="none"><path d="M2 3.500h7a6 6 0 0 1 6 6v7" stroke="#222" stroke-width="1.200"/><path d="M9 3.500h6v6" stroke="#444" stroke-width="1" stroke-dasharray="1.200 1"/></svg>
<svg style="left:257px;top:106px" width="18" height="18" viewBox="0 0 18 18" fill="none"><path d="M2 3.500h6l7 7v6" stroke="#222" stroke-width="1.200"/><path d="M8 3.500h7v7" stroke="#444" stroke-width="1" stroke-dasharray="1.200 1"/></svg>
<svg style="left:280px;top:106px" width="18" height="18" viewBox="0 0 18 18" fill="none"><path d="M3 2.500h3.500v9.500H16v3.500H5L3 13.500z" fill="#7e9fc4"/><path d="M3 2.500h3.500v9.500H16v3.500H5L3 13.500z" fill="none" stroke="#3f6796" stroke-width=".8" stroke-dasharray="1 1"/></svg>
<div class="a" style="left:305px;top:103px;width:2px;height:22px;background:#6fa5d8;"></div>
<div class="a" style="left:308px;top:103px;width:1px;height:22px;background:#6fa5d8;"></div>
<svg style="left:316.5px;top:106px" width="18" height="18" viewBox="0 0 18 18" fill="none"><circle cx="11" cy="7" r="4.800" fill="#fff" stroke="#555" stroke-width="1.100"/><path d="M7.500 10.500L2.500 15.500" stroke="#555" stroke-width="1.300"/><path d="M2 13.500v2.500h2.500" stroke="#3a6ea8" stroke-width="1.200"/><text x="11" y="10" font-family="Liberation Sans,sans-serif" font-size="7.500" font-weight="700" fill="#333" text-anchor="middle">1</text></svg>
<svg style="left:340px;top:106px" width="18" height="18" viewBox="0 0 18 18" fill="none"><path d="M3.500 3.500h13v13h-13z" fill="#c9dcf4" stroke="#5d8cc6"/><path d="M3.500 3.500h13v3h-13z" fill="#5d8cc6"/><path d="M3.500 10h13M3.500 13.500h13M8 6.500v10M12.500 6.500v10" stroke="#fff"/><circle cx="5" cy="5.500" r="4" fill="#2f9e44"/><path d="M5 3v5M2.500 5.500h5" stroke="#fff" stroke-width="1.500"/></svg>
<svg style="left:363.5px;top:106px" width="18" height="18" viewBox="0 0 18 18" fill="none"><path d="M2.500 2.500h12v13h-12z" fill="#fff" stroke="#4a6f9a" stroke-width="1.200"/><path d="M2.500 6.500h12M2.500 11h12M6.500 2.500v13M10.500 2.500v13" stroke="#4a6f9a" stroke-width="1.200"/><path d="M8.500 15.500l1-3 5-4.500 2 2-5 4.500z" fill="#f4d27a"/><path d="M8 16.500h8" stroke="#555"/></svg>
<svg style="left:386.5px;top:106px" width="18" height="18" viewBox="0 0 18 18" fill="none"><path d="M3.500 3.500h13v13h-13z" fill="#c9dcf4" stroke="#5d8cc6"/><path d="M3.500 3.500h13v3h-13z" fill="#5d8cc6"/><path d="M3.500 10h13M3.500 13.500h13M8 6.500v10M12.500 6.500v10" stroke="#fff"/><path d="M13 17.500v-4h-2l3.500-3.500 3.500 3.500h-2v4z" fill="#35a14a" stroke="#fff" stroke-width=".6"/></svg>
<div class="a" style="left:409.5px;top:105px;width:1px;height:20px;background:#c6c6c6;"></div>
<svg style="left:415.5px;top:106px" width="18" height="18" viewBox="0 0 18 18" fill="none"><circle cx="11" cy="6.500" r="4.500" fill="#fff" stroke="#555" stroke-width="1.100"/><path d="M7.500 10L2 15.500" stroke="#444" stroke-width="1.300"/><text x="11" y="9.500" font-family="Liberation Sans,sans-serif" font-size="7.500" font-weight="700" fill="#333" text-anchor="middle">1</text><path d="M7 17l2-4.500 6-1.500-2 4z" fill="#666"/></svg>
<svg style="left:439px;top:106px" width="18" height="18" viewBox="0 0 18 18" fill="none"><path d="M2.500 2.500h13v14h-13z" fill="#c9dcf4" stroke="#5d8cc6"/><path d="M2.500 2.500h13v3h-13zM2.500 9.500h13v2.500h-13z" fill="#3d6fb5"/><path d="M7 2.500v14M11.500 2.500v14" stroke="#fff" stroke-width=".8"/><path d="M7.500 11l1-2.500 6.500-6.500 2 2-6.500 6.500z" fill="#f2c230" stroke="#c89418" stroke-width=".6"/></svg>
<svg style="left:461.5px;top:106px" width="18" height="18" viewBox="0 0 18 18" fill="none"><path d="M2 6.500l2.500-3h8M2 10.500l2.500-3h8M2 14.500l2.500-3h8" stroke="#34495f" stroke-width="1.050"/><text x="15" y="5.500" font-family="Liberation Sans,sans-serif" font-size="5" font-weight="700" fill="#222" text-anchor="middle">1</text><text x="15" y="11" font-family="Liberation Sans,sans-serif" font-size="5" font-weight="700" fill="#222" text-anchor="middle">2</text><text x="15" y="16.500" font-family="Liberation Sans,sans-serif" font-size="5" font-weight="700" fill="#222" text-anchor="middle">3</text></svg>
<svg style="left:484.5px;top:106px" width="18" height="18" viewBox="0 0 18 18" fill="none"><path d="M2 16l4.500-7M6.500 16l4.500-7M11 16l4.500-7M4 9h13" stroke="#34495f" stroke-width="1.050"/><text x="10.500" y="7" font-family="Liberation Sans,sans-serif" font-size="6" font-weight="700" fill="#222" text-anchor="middle" letter-spacing="1">123</text></svg>
<div class="a" style="left:507.5px;top:105px;width:1px;height:20px;background:#c6c6c6;"></div>
<svg style="left:514.5px;top:106px" width="18" height="18" viewBox="0 0 18 18" fill="none"><path d="M6.500 8.500h10.500M6.500 8.500L2.500 12.500" stroke="#34495f" stroke-width="1.050"/><path d="M2 10v3h3" stroke="#2f4a68" stroke-width="1.100"/><text x="4" y="7" font-family="Liberation Sans,sans-serif" font-size="6.500" font-weight="700" fill="#222" text-anchor="middle">2</text><circle cx="12" cy="12.500" r="1.800" fill="#fff" stroke="#555" stroke-width=".8"/><path d="M10.500 16.500h3" stroke="#555"/></svg>
<svg style="left:536.5px;top:106px" width="18" height="18" viewBox="0 0 18 18" fill="none"><path d="M6.500 8.500h10.500M6.500 8.500L2.500 12.500" stroke="#34495f" stroke-width="1.050"/><path d="M2 10v3h3" stroke="#2f4a68" stroke-width="1.100"/><text x="4" y="7" font-family="Liberation Sans,sans-serif" font-size="6.500" font-weight="700" fill="#222" text-anchor="middle">2</text><circle cx="12" cy="12.500" r="1.800" fill="#e9e04a" stroke="#555" stroke-width=".8"/><path d="M10.500 16.500h3" stroke="#555"/></svg>
<div class="a" style="left:559px;top:105px;width:1px;height:20px;background:#c6c6c6;"></div>
<svg style="left:565.5px;top:106px" width="18" height="18" viewBox="0 0 18 18" fill="none"><path d="M2.500 15.500l4-4" stroke="#34495f" stroke-width="1.050"/><path d="M2 13v3h3" stroke="#2f4a68" stroke-width="1.100"/><path d="M6.500 11.500l1-1 1 1 1-1 1 1 1-1 1 1 1-1 1 1 1-1" stroke="#2f4a68" stroke-width="1"/><text x="11.500" y="8" font-family="Liberation Sans,sans-serif" font-size="6" font-weight="700" fill="#222" text-anchor="middle" letter-spacing="1">123</text></svg>
<svg style="left:588.5px;top:106px" width="18" height="18" viewBox="0 0 18 18" fill="none"><path d="M9.500 8.500L3 14.500M9.500 8.500L16 14.500M9.500 8.500v8.500M8 8.500h8M13.500 4v4" stroke="#34495f" stroke-width="1"/><path d="M2.500 12v3h3M16.500 12v3h-3M8 15.500l1.500 2 1.500-2" stroke="#2f4a68" stroke-width="1"/><circle cx="5" cy="5" r="3.600" fill="#4aa366"/><path d="M3 5h4M5 3v4" stroke="#fff" stroke-width="1.400"/></svg>
<svg style="left:612px;top:106px" width="18" height="18" viewBox="0 0 18 18" fill="none"><path d="M9.500 8.500L3 14.500M9.500 8.500L16 14.500M9.500 8.500v8.500M8 8.500h8M13.500 4v4" stroke="#34495f" stroke-width="1"/><path d="M2.500 12v3h3M16.500 12v3h-3M8 15.500l1.500 2 1.500-2" stroke="#2f4a68" stroke-width="1"/><circle cx="5" cy="5" r="3.600" fill="#d9534a"/><path d="M3 5h4" stroke="#fff" stroke-width="1.400"/></svg>
<div class="a" style="left:636px;top:103px;width:2px;height:22px;background:#6fa5d8;"></div>
<div class="a" style="left:639px;top:103px;width:1px;height:22px;background:#6fa5d8;"></div>
<svg style="left:650px;top:106px" width="18" height="18" viewBox="0 0 18 18" fill="none"><path d="M2.500 9.500h6.500" stroke="#222" stroke-width="1.200"/><path d="M2.500 9.500L7 14l9.500-6" stroke="#222" stroke-width="1.300"/><text x="7.500" y="7.500" font-family="Liberation Sans,sans-serif" font-size="6.500" font-weight="700" fill="#3c5f86" text-anchor="middle">3.2</text><path d="M3.500 8h8" stroke="#3c5f86" stroke-width=".8"/></svg>
<svg style="left:672.5px;top:106px" width="18" height="18" viewBox="0 0 18 18" fill="none"><path d="M2.500 5.500h13v8h-13z" fill="#a9c3e6" stroke="#222" stroke-width="1.300"/><path d="M9 5.500v8" stroke="#222" stroke-width="1.300"/><text x="5.800" y="12" font-family="Liberation Sans,sans-serif" font-size="6.500" fill="#47698f" text-anchor="middle">0</text><text x="12.300" y="12" font-family="Liberation Sans,sans-serif" font-size="6.500" fill="#47698f" text-anchor="middle">0</text></svg>
<svg style="left:696px;top:106px" width="18" height="18" viewBox="0 0 18 18" fill="none"><circle cx="9" cy="7" r="5" stroke="#222" stroke-width="1.300"/><path d="M9 12v4M5 16.500h8" stroke="#222" stroke-width="1.500"/><text x="9" y="10" font-family="Liberation Sans,sans-serif" font-size="8" font-weight="700" fill="#222" text-anchor="middle">C</text></svg>
<svg style="left:719px;top:106px" width="18" height="18" viewBox="0 0 18 18" fill="none"><path d="M1.500 10.500h15M9 10.500v6" stroke="#222" stroke-width="1.200"/><path d="M7 14l2 2.500 2-2.500" stroke="#222"/><text x="9" y="8.500" font-family="Liberation Sans,sans-serif" font-size="9" fill="#222" text-anchor="middle">A</text></svg>
<svg style="left:742.5px;top:106px" width="18" height="18" viewBox="0 0 18 18" fill="none"><circle cx="11" cy="6.500" r="5" stroke="#222" stroke-width="1.200"/><path d="M6 6.500h10" stroke="#222"/><path d="M7.500 10.500L2 16" stroke="#222" stroke-width="1.200"/><path d="M1.500 13.500v3h3" stroke="#222"/><text x="11" y="11" font-family="Liberation Sans,sans-serif" font-size="5" font-weight="700" fill="#222" text-anchor="middle">A</text><text x="11" y="5.500" font-family="Liberation Sans,sans-serif" font-size="4.500" font-weight="700" fill="#222" text-anchor="middle">1</text></svg>
<svg style="left:765px;top:106px" width="18" height="18" viewBox="0 0 18 18" fill="none"><path d="M1.500 9h15" stroke="#222" stroke-width="1.200"/><path d="M8 5.500v7l6-3.500z" fill="#fff" stroke="#222" stroke-width="1.100"/><path d="M16.500 9l-3-1.500v3z" fill="#222"/></svg>
<svg style="left:784px;top:104px" width="22" height="22" viewBox="0 0 22 22" fill="none"><path d="M1 9h17" stroke="#f1d860" stroke-width="1"/><path d="M3 2.500v13M5.500 2.500v13" stroke="#222" stroke-width="1.200"/><path d="M11.500 3L5.500 9l6 6.500" stroke="#222" stroke-width="1.200"/><text x="14.500" y="13" font-family="Liberation Sans,sans-serif" font-size="9.500" fill="#f0c840" text-anchor="middle">B</text></svg>
<svg style="left:810.5px;top:106px" width="18" height="18" viewBox="0 0 18 18" fill="none"><circle cx="9" cy="9" r="6.800" stroke="#222" stroke-width="1.200"/><path d="M0.500 9h17M9 0.500v17" stroke="#f0c840" stroke-width="1" stroke-dasharray="4 1.500 1 1.500"/></svg>
<svg style="left:834px;top:106px" width="18" height="18" viewBox="0 0 18 18" fill="none"><path d="M1.500 16.400L8 9.300 3.100 6.500l9.300-.5 3.900-4.400M12.400 6l3.300 5.500L8 9.300" stroke="#5b8fc9" stroke-width="1.200"/></svg>
<svg style="left:857px;top:106px" width="18" height="18" viewBox="0 0 18 18" fill="none"><path d="M2 8.500h14.500" stroke="#222" stroke-width="1.200"/><path d="M3 8.500l3.500 4.500 3.500-4.500" fill="#fff" stroke="#222" stroke-width="1.100"/></svg>
<svg style="left:879.5px;top:106px" width="18" height="18" viewBox="0 0 18 18" fill="none"><path d="M2.500 15.500l3.500-8.500h10.500" stroke="#222" stroke-width="1.300"/><path d="M8 5.500l3.500-3.500 3.500 3.500M8 9.500h8" stroke="#f0c030" stroke-width="1"/></svg>
<svg style="left:903px;top:106px" width="18" height="18" viewBox="0 0 18 18" fill="none"><rect x="1" y="1" width="16" height="16" fill="#dbe7f6"/><rect x="2.5" y="2.5" width="3" height="3" fill="#fff" stroke="#2f5f92" stroke-width="1.400"/><rect x="2.5" y="7.5" width="3" height="3" fill="#fff" stroke="#2f5f92" stroke-width="1.400"/><rect x="2.5" y="12.5" width="3" height="3" fill="#fff" stroke="#2f5f92" stroke-width="1.400"/><rect x="7.5" y="2.5" width="3" height="3" fill="#fff" stroke="#2f5f92" stroke-width="1.400"/><rect x="7.5" y="7.5" width="3" height="3" fill="#fff" stroke="#2f5f92" stroke-width="1.400"/><rect x="7.5" y="12.5" width="3" height="3" fill="#fff" stroke="#2f5f92" stroke-width="1.400"/><rect x="12.5" y="2.5" width="3" height="3" fill="#fff" stroke="#2f5f92" stroke-width="1.400"/><rect x="12.5" y="7.5" width="3" height="3" fill="#fff" stroke="#2f5f92" stroke-width="1.400"/><rect x="12.5" y="12.5" width="3" height="3" fill="#fff" stroke="#2f5f92" stroke-width="1.400"/></svg>
<div class="a" style="left:928px;top:103px;width:2px;height:22px;background:#6fa5d8;"></div>
<div class="a" style="left:931px;top:103px;width:1px;height:22px;background:#6fa5d8;"></div>
<svg style="left:941px;top:106px" width="18" height="18" viewBox="0 0 18 18" fill="none"><path d="M1.500 9.500h15" stroke="#3a5f8a"/><path d="M5 4.500h4v10H5z" fill="#c9dcf4" stroke="#3a5f8a" stroke-width="1.200"/><path d="M9 7.500h7.500v4H9" stroke="#3a5f8a" stroke-width="1.200"/><path d="M10 9.500h6" stroke="#3a5f8a" stroke-dasharray="2 1"/></svg>
<svg style="left:964px;top:106px" width="18" height="18" viewBox="0 0 18 18" fill="none"><path d="M3.500 2.500h11v13h-11z" fill="#c9dcf4" stroke="#4a7fb5" stroke-width="1.200"/><circle cx="9" cy="6.500" r="3" fill="#fff" stroke="#4a7fb5"/><path d="M3.500 11h11" stroke="#fff"/><path d="M1.500 16.500h15" stroke="#f0c030" stroke-width="1.200" stroke-dasharray="3 1"/></svg>
<svg style="left:986.5px;top:106px" width="18" height="18" viewBox="0 0 18 18" fill="none"><path d="M2.500 6v10h13V6" stroke="#4a7fb5" stroke-width="1.300"/><path d="M5.500 16V7a3.500 4 0 0 1 7 0v9" fill="#c9dcf4" stroke="#4a7fb5" stroke-width="1.200"/><path d="M9 1.500v15M5.500 9h7" stroke="#f0c030" stroke-width="1"/><circle cx="9" cy="6" r="1.800" stroke="#4a7fb5"/></svg>
<svg style="left:1009px;top:106px" width="18" height="18" viewBox="0 0 18 18" fill="none"><path d="M2.500 2.500v13h13z" fill="#c9dcf4" stroke="#4a7fb5" stroke-width="1.300"/></svg>
<svg style="left:1032px;top:106px" width="18" height="18" viewBox="0 0 18 18" fill="none"><path d="M1.500 9h15" stroke="#4a7fb5" stroke-width="1.200"/><rect x="6" y="2.500" width="6" height="13" rx="2.500" fill="#c9dcf4" stroke="#4a7fb5" stroke-width="1.300"/><path d="M6 6.500h6M6 11.500h6" stroke="#4a7fb5"/></svg>
<svg style="left:1056px;top:106px" width="18" height="18" viewBox="0 0 18 18" fill="none"><path d="M3 3.500h12M15 3.500L3 7.500M3 7.500h12M15 7.500L3 11.500M3 11.500h12M15 11.500L3 15.500M3 15.500h12" stroke="#8a8a8a" stroke-width="2"/></svg>
<svg style="left:1079px;top:106px" width="18" height="18" viewBox="0 0 18 18" fill="none"><path d="M2.500 15.500v-8l4.500-5h2v3h6.500v10z" fill="#c9dcf4" stroke="#4a7fb5" stroke-width="1.300"/><circle cx="6.500" cy="12" r="1.800" stroke="#4a7fb5"/><circle cx="12" cy="11" r="2.200" stroke="#4a7fb5"/><circle cx="7" cy="7.500" r="1" fill="#d9534a"/><circle cx="12" cy="11" r=".8" fill="#d9534a"/></svg>
<svg style="left:1101.5px;top:106px" width="18" height="18" viewBox="0 0 18 18" fill="none"><path d="M3 11.500h12v4H3zM6 7.500h6v4H6z" fill="#c9dcf4" stroke="#4a7fb5" stroke-width="1.200"/><path d="M9 1.500v16M2 11.500h14" stroke="#f0c030" stroke-width="1"/></svg>
<svg style="left:1124.5px;top:106px" width="18" height="18" viewBox="0 0 18 18" fill="none"><path d="M4 4.500h8l3.500 2.500v5L12 14.500H4L2.500 12V7z" fill="#c9dcf4" stroke="#4a7fb5" stroke-width="1.500"/><path d="M6 7.500h6M6 10h6M8 14.500v2h3v-2" stroke="#4a7fb5" stroke-width="1.200"/><path d="M1 9.500h3" stroke="#4a7fb5" stroke-width="2"/></svg>
<svg style="left:1148.5px;top:106px" width="18" height="18" viewBox="0 0 18 18" fill="none"><path d="M2 3h14M2 15.500h14" stroke="#4a7fb5" stroke-width="2"/><path d="M5.500 3v12.500M12.500 3v12.500" stroke="#4a7fb5" stroke-width="1.500"/><path d="M5.500 7h7M5.500 11.500h7" stroke="#4a7fb5" stroke-width="1.300"/><path d="M5.500 3h7v12.500h-7z" fill="#c9dcf4" opacity=".6"/><path d="M9 1v16" stroke="#9ab" stroke-width=".8"/></svg>
<div class="a" style="left:1172px;top:105px;width:1px;height:20px;background:#c6c6c6;"></div>
<svg style="left:1176.5px;top:106px" width="18" height="18" viewBox="0 0 18 18" fill="none"><rect x="3.500" y="3.500" width="11" height="11" rx="2" fill="#c9dcf4" stroke="#4a7fb5" stroke-width="1.300"/><path d="M6.500 3.500v11M11.500 3.500v11M2 6.500v5M16 6.500v5" stroke="#4a7fb5" stroke-width="1.300"/><path d="M0.500 9h17" stroke="#f0c030" stroke-width="1"/></svg>
<svg style="left:1199.5px;top:106px" width="18" height="18" viewBox="0 0 18 18" fill="none"><path d="M6.500 2.500h5v4h4.500v5h-4.500v4h-5v-4H2v-5h4.500z" fill="#c9dcf4" stroke="#4a7fb5" stroke-width="1.300"/><path d="M0.500 9h17M9 0.500v17" stroke="#f0c030" stroke-width="1"/><circle cx="9" cy="9" r="1.500" fill="#4a7fb5"/></svg>
<svg style="left:1223px;top:106px" width="18" height="18" viewBox="0 0 18 18" fill="none"><path d="M3.500 4.500h11v9.500h-11z" fill="#6f9bd0" stroke="#2f5f92" stroke-width="1.400"/><path d="M6 3v13M12 3v13M3.500 16h3M11.500 16h3" stroke="#2f5f92" stroke-width="1.500"/><path d="M7.500 6.500h3v5.500h-3z" fill="#c9dcf4"/></svg>
<svg style="left:1245.5px;top:106px" width="18" height="18" viewBox="0 0 18 18" fill="none"><path d="M7 2.500h4v2.500h1.500v3H15v4h-2.500v2.500h2v2H3.500v-2h2V12H3V8h2.500V5H7z" fill="#c9dcf4" stroke="#2f5f92" stroke-width="1.400"/><path d="M7 8v4M9 8v4M11 8v4" stroke="#2f5f92"/></svg>
<div class="a" style="left:3px;top:131px;width:21px;height:1px;background:#6fa5d8;"></div>
<div class="a" style="left:3px;top:132px;width:21px;height:1px;background:#a9c9ea;"></div>
<div class="a" style="left:3px;top:134px;width:21px;height:1px;background:#6fa5d8;"></div>
<svg style="left:4px;top:141px" width="18" height="18" viewBox="0 0 18 18" fill="none"><path d="M2.500 3l12 12" stroke="#2b3340" stroke-width="1.1"/><circle cx="2.500" cy="3" r="1" fill="#2b3340"/><circle cx="14.500" cy="15" r="1" fill="#2b3340"/></svg>
<svg style="left:4px;top:163px" width="18" height="18" viewBox="0 0 18 18" fill="none"><path d="M3 3.500l12 11" stroke="#3a5f8a" stroke-width="1.200" stroke-dasharray="2.500 1.500"/><path d="M3 6.500V3.500h3M15 11.500v3h-3" stroke="#3a5f8a" stroke-width="1.200"/></svg>
<svg style="left:4px;top:185px" width="18" height="18" viewBox="0 0 18 18" fill="none"><path d="M15 14.500H7.500a5 5 0 0 1 0-10H9" stroke="#2b3340" stroke-width="1.300" stroke-dasharray="2.500 1.800"/><circle cx="10" cy="4.500" r="1" fill="#2b3340"/><circle cx="15.500" cy="14.500" r="1" fill="#2b3340"/></svg>
<svg style="left:4px;top:207px" width="18" height="18" viewBox="0 0 18 18" fill="none"><path d="M9 2.500l6.500 5-2.500 8H5l-2.500-8z" stroke="#2b3340" stroke-width="1.1"/></svg>
<svg style="left:4px;top:229px" width="18" height="18" viewBox="0 0 18 18" fill="none"><path d="M4 4.500h10.500v9.500H4z" stroke="#2b3340" stroke-width="1.1"/><circle cx="3.500" cy="3.500" r="1" fill="#2b3340"/><circle cx="15" cy="15" r="1" fill="#2b3340"/></svg>
<svg style="left:4px;top:251px" width="18" height="18" viewBox="0 0 18 18" fill="none"><path d="M3 14.500A11 11 0 0 1 13.500 3.500" stroke="#2b3340" stroke-width="1.200" stroke-dasharray="3 1.600"/><circle cx="3" cy="15" r="1" fill="#2b3340"/><circle cx="14" cy="3.500" r="1" fill="#2b3340"/><path d="M17 13v4h-4z" fill="#111"/></svg>
<svg style="left:4px;top:273px" width="18" height="18" viewBox="0 0 18 18" fill="none"><circle cx="9" cy="9" r="6.200" stroke="#2b3340" stroke-width="1.1"/><path d="M9 9h6" stroke="#2b3340" stroke-width="1.200" stroke-dasharray="2 1.200"/><circle cx="9" cy="9" r="1" fill="#2b3340"/></svg>
<svg style="left:4px;top:295px" width="18" height="18" viewBox="0 0 18 18" fill="none"><path d="M5 13.500a3 3 0 0 1-1.500-5.500 3 3 0 0 1 3-4 3.500 3.500 0 0 1 6 .5 3 3 0 0 1 2 5 3 3 0 0 1-3 4 3.500 3.500 0 0 1-6.500 0z" stroke="#2b3340" stroke-width="1.300"/></svg>
<svg style="left:4px;top:317px" width="18" height="18" viewBox="0 0 18 18" fill="none"><path d="M2.500 13c0-6 5-6 6.500-3s6 2 6.500-4" stroke="#2b3340" stroke-width="1.200" stroke-dasharray="3 1.500"/><circle cx="2.500" cy="13.500" r="1" fill="#2b3340"/><circle cx="15.500" cy="5.500" r="1" fill="#2b3340"/></svg>
<svg style="left:4px;top:339px" width="18" height="18" viewBox="0 0 18 18" fill="none"><ellipse cx="9" cy="9" rx="6.500" ry="5.500" stroke="#2b3340" stroke-width="1.1" stroke-dasharray="3.500 1.500"/></svg>
<svg style="left:4px;top:361px" width="18" height="18" viewBox="0 0 18 18" fill="none"><path d="M11 3.500a6 6 0 1 0 5 8" stroke="#2b3340" stroke-width="1.1"/><circle cx="16" cy="12" r="1" fill="#2b3340"/></svg>
<svg style="left:4px;top:383px" width="18" height="18" viewBox="0 0 18 18" fill="none"><path d="M9 3.500h6.500v11H12" stroke="#2b3340" stroke-width="1.200"/><path d="M3.500 8v7h5" stroke="#2b3340" stroke-width="1.200" stroke-dasharray="2 1"/><circle cx="8" cy="11.500" r="3.300" fill="#fff" stroke="#2b3340" stroke-width="1.200"/><path d="M3 5.500h7" stroke="#3d9a72" stroke-width="2"/><path d="M8 2.500l3 3-3 3" stroke="#3d9a72" stroke-width="1.600"/><path d="M17 13v4h-4z" fill="#111"/></svg>
<svg style="left:4px;top:405px" width="18" height="18" viewBox="0 0 18 18" fill="none"><path d="M3.500 10V3.500h5" stroke="#2b3340" stroke-width="1.200" stroke-dasharray="2.500 1.500"/><circle cx="10.500" cy="10.500" r="5" fill="#fff" stroke="#2b3340" stroke-width="1.1"/></svg>
<svg style="left:4px;top:427px" width="18" height="18" viewBox="0 0 18 18" fill="none"><circle cx="9" cy="4" r="1.100" fill="#2b3340"/><circle cx="4" cy="13" r="1.100" fill="#2b3340"/><circle cx="14" cy="13" r="1.100" fill="#2b3340"/></svg>
<svg style="left:4px;top:449px" width="18" height="18" viewBox="0 0 18 18" fill="none"><rect x="2.500" y="2.500" width="13" height="13" rx="1" fill="#fff" stroke="#2b3340" stroke-width="1.1"/><rect x="4.500" y="4.500" width="9" height="9" fill="#5c86bd"/><path d="M4.500 6.500h9M4.500 8.500h9M4.500 10.500h9M4.500 12.500h9" stroke="#a9c3e6" stroke-width=".7" stroke-dasharray="1 1"/></svg>
<svg style="left:4px;top:471px" width="18" height="18" viewBox="0 0 18 18" fill="none"><rect x="2.500" y="4" width="13" height="10" fill="#fff" stroke="#2b3340" stroke-width="1.1"/><circle cx="9" cy="9" r="2.500" stroke="#2b3340" stroke-width="1.200"/></svg>
<svg style="left:4px;top:493px" width="18" height="18" viewBox="0 0 18 18" fill="none"><path d="M2 2.500h14v13H2z" fill="#fff"/><path d="M2 2.500h14v4H2z" fill="#3d6fb5"/><path d="M2 9.500h14M2 12.500h14M2 15.500h14M2.500 6v9.500M6 6v9.500M9.500 6v9.500M13 6v9.500M15.500 6v9.500" stroke="#7a5a8a" stroke-width="1"/></svg>
<svg style="left:4px;top:515px" width="18" height="18" viewBox="0 0 18 18" fill="none"><rect x="2.500" y="2.500" width="13" height="13" fill="#fff" stroke="#2b3340" stroke-width="1.1"/><text x="6.500" y="9.500" font-family="Liberation Sans,sans-serif" font-size="7" fill="#3a5f8a" text-anchor="middle">A</text><path d="M9.500 9h4.500M4.500 11.500h9.500M4.500 13.500h9.500" stroke="#444" stroke-width="1"/></svg>
<div class="a" style="left:1094px;top:131px;width:21px;height:1px;background:#6fa5d8;"></div>
<div class="a" style="left:1094px;top:132px;width:21px;height:1px;background:#a9c9ea;"></div>
<div class="a" style="left:1094px;top:134px;width:21px;height:1px;background:#6fa5d8;"></div>
<svg style="left:1093.5px;top:140px" width="18" height="18" viewBox="0 0 18 18" fill="none"><path d="M4.500 5.500h11v9h-11z" fill="#c9dcf4" stroke="#6c9bd2"/><path d="M4.500 10.500h11M10.500 5.500v9" stroke="#fff"/><circle cx="5.500" cy="5.500" r="3.500" fill="#f5b52e"/><circle cx="5.500" cy="5.500" r="1.300" fill="none" stroke="#d08a10"/><path d="M18 14v4h-4z" fill="#111"/></svg>
<svg style="left:1093.5px;top:162.5px" width="18" height="18" viewBox="0 0 18 18" fill="none"><circle cx="11" cy="7" r="4.800" fill="#fff" stroke="#555" stroke-width="1.100"/><path d="M7.500 10.500L2.500 15.500" stroke="#555" stroke-width="1.300"/><path d="M2 13.500v2.500h2.500" stroke="#3a6ea8" stroke-width="1.200"/><text x="11" y="10" font-family="Liberation Sans,sans-serif" font-size="7.500" font-weight="700" fill="#333" text-anchor="middle">1</text><path d="M18 14v4h-4z" fill="#111"/></svg>
<svg style="left:1093.5px;top:185px" width="18" height="18" viewBox="0 0 18 18" fill="none"><path d="M3.500 1.500v14.500h13" stroke="#2f4a68" stroke-width="1.400"/><path d="M1.500 4l2-2.500 2 2.500" stroke="#2f4a68"/><path d="M4 15l5-4.500h5v-5" stroke="#f0c040" stroke-width="1.300"/><path d="M18 14v4h-4z" fill="#111"/></svg>
<svg style="left:1093.5px;top:207.5px" width="18" height="18" viewBox="0 0 18 18" fill="none"><path d="M1.500 8.500h14M7.500 1.500v15" stroke="#34495f" stroke-width="1.050"/><path d="M3 12.500c2-7 8-7 12 0" stroke="#34495f" stroke-width="1"/><path d="M4.500 11h9" stroke="#6c9bd2"/><path d="M18 14v4h-4z" fill="#111"/></svg>
<svg style="left:1093.5px;top:229px" width="18" height="18" viewBox="0 0 18 18" fill="none"><path d="M2.500 2v14M15.500 2v14" stroke="#222" stroke-width="1.300"/><circle cx="9" cy="7.500" r="3.800" stroke="#777"/><path d="M3 7.500h12" stroke="#4a7fb5" stroke-width="1.200"/><path d="M5.500 5.500l-2.500 2 2.500 2M12.500 5.500l2.500 2-2.500 2" stroke="#4a7fb5"/><path d="M9 11.500l4 4.500" stroke="#555"/><path d="M18 14v4h-4z" fill="#111"/></svg>
<svg style="left:1093.5px;top:251px" width="18" height="18" viewBox="0 0 18 18" fill="none"><path d="M2.500 9.500h6.500" stroke="#222" stroke-width="1.200"/><path d="M2.500 9.500L7 14l9.500-6" stroke="#222" stroke-width="1.300"/><text x="7.500" y="7.500" font-family="Liberation Sans,sans-serif" font-size="6.500" font-weight="700" fill="#3c5f86" text-anchor="middle">3.2</text><path d="M3.500 8h8" stroke="#3c5f86" stroke-width=".8"/><path d="M18 14v4h-4z" fill="#111"/></svg>
<svg style="left:1093.5px;top:272.5px" width="18" height="18" viewBox="0 0 18 18" fill="none"><path d="M5.500 3.500h-3v11h3" stroke="#222" stroke-width="1.200" stroke-dasharray="2 1.200"/><path d="M4 2l2 1.500L4 5M4 13l2 1.500L4 16" stroke="#222"/><text x="11.500" y="11.500" font-family="Liberation Mono,monospace" font-size="6.500" font-weight="700" fill="#222" text-anchor="middle">A-A</text><path d="M18 14v4h-4z" fill="#111"/></svg>
<svg style="left:1093.5px;top:294.5px" width="18" height="18" viewBox="0 0 18 18" fill="none"><path d="M3 4l6-2.500-1 3.500 4-.5-6 6 1-3.500-4.500 1z" fill="#f3bf35" stroke="#e0a020" stroke-width=".8"/><path d="M6 14.500l8.500-7 2.500 3-8.500 7-3 .5z" fill="#eeb32c"/><path d="M18 14v4h-4z" fill="#111"/></svg>
<div class="t mono" style="left:1093px;top:321px;font-size:8.500px;color:#5f968a;letter-spacing:-0.4px">TeXt</div>
<svg style="left:1093.5px;top:315px" width="18" height="18" viewBox="0 0 18 18" fill="none"><path d="M18 14v4h-4z" fill="#111"/></svg>
<svg style="left:1093.5px;top:339px" width="18" height="18" viewBox="0 0 18 18" fill="none"><path d="M2.500 4.500a1 1 0 0 1 1-1h4l1.500 2h6.500v10h-13z" fill="#c9dcf4" stroke="#4a7fb5" stroke-width="1.200"/><path d="M5 8.500h8v5H5zM3.500 11h11M9 7.500v7" stroke="#4a7fb5" stroke-width="1"/><path d="M18 14v4h-4z" fill="#111"/></svg>
<svg style="left:1093.5px;top:360.5px" width="18" height="18" viewBox="0 0 18 18" fill="none"><ellipse cx="11.500" cy="9" rx="4" ry="6.500" fill="#d5d9de" stroke="#6a7480" stroke-width="1.200"/><rect x="2.500" y="6.500" width="9" height="5" rx="2" fill="#c9dcf4" stroke="#34495f" stroke-width="1.050"/><path d="M18 14v4h-4z" fill="#111"/></svg>
<svg style="left:1093.5px;top:382px" width="18" height="18" viewBox="0 0 18 18" fill="none"><path d="M3 3.500h12v3H3z" fill="#c9dcf4" stroke="#4a7fb5" stroke-width="1.300"/><path d="M4.500 6.500h9v7l-2 3h-5l-2-3z" fill="#c9dcf4" stroke="#4a7fb5" stroke-width="1.300"/><path d="M7.500 6.500v10M10.500 6.500v10" stroke="#4a7fb5"/><path d="M18 14v4h-4z" fill="#111"/></svg>
<svg style="left:1093.5px;top:404px" width="18" height="18" viewBox="0 0 18 18" fill="none"><path d="M2.500 3.500h10v8h-10z" fill="#fff" stroke="#4a7fb5" stroke-width="1.200"/><path d="M5.500 6.500h11v8h-11z" fill="#c9dcf4" stroke="#4a7fb5" stroke-width="1.200"/><path d="M7.500 9h4v3h-4zM13 9.500h2M13 11.500h2" stroke="#4a7fb5" stroke-width="1"/><path d="M18 14v4h-4z" fill="#111"/></svg>
<svg style="left:1093.5px;top:426.5px" width="18" height="18" viewBox="0 0 18 18" fill="none"><path d="M3.500 2.500h11v13h-11z" fill="#fff" stroke="#222" stroke-width="1.400"/><path d="M3.500 2.500v13" stroke="#222" stroke-width="2.500"/><path d="M3.500 4.500h11" stroke="#222"/><text x="10" y="13" font-family="Liberation Sans,sans-serif" font-size="9" font-weight="700" fill="#6c7f99" text-anchor="middle">?</text><path d="M18 14v4h-4z" fill="#111"/></svg>
<div class="a" style="left:1091px;top:453px;width:24px;height:1px;background:#e1e3e6;"></div>
<div class="a" style="left:1094px;top:457px;width:21px;height:1px;background:#6fa5d8;"></div>
<div class="a" style="left:1094px;top:458px;width:21px;height:1px;background:#a9c9ea;"></div>
<div class="a" style="left:1094px;top:460px;width:21px;height:1px;background:#6fa5d8;"></div>
<svg style="left:1093.5px;top:467px" width="18" height="18" viewBox="0 0 18 18" fill="none"><rect x="1.500" y="6" width="15" height="6.500" rx="2" transform="rotate(-38 9 9)" fill="#dce8f7" stroke="#39485a" stroke-width="1.200"/><rect x="9" y="6.500" width="4" height="5" transform="rotate(-38 9 9)" fill="#5c86bd"/></svg>
<svg style="left:1093.5px;top:489px" width="18" height="18" viewBox="0 0 18 18" fill="none"><rect x="2.500" y="2.500" width="5" height="5" fill="#fff" stroke="#222" stroke-width="1.100"/><path d="M9.500 11v4.500h6V11" stroke="#222" stroke-width="1.200" stroke-dasharray="2 1"/><path d="M10 3.500a4 4 0 0 1 3 5.500" stroke="#3a7ab5" stroke-width="1.600"/><path d="M10.500 8l2.500 2.500 2-3" stroke="#3a7ab5" stroke-width="1.400"/></svg>
<svg style="left:1093.5px;top:511px" width="18" height="18" viewBox="0 0 18 18" fill="none"><path d="M7.500 4.500v11h-6z" fill="#fff" stroke="#444" stroke-width="1.100"/><path d="M10.500 4.500v11h6z" fill="#8c3a72"/><path d="M9 1.500v16" stroke="#444" stroke-width="1"/></svg>
<svg style="left:1093.5px;top:533px" width="18" height="18" viewBox="0 0 18 18" fill="none"><path d="M3.500 15.500h12M3.500 15.500a3 3 0 0 1 0-6h3a3.500 3.500 0 1 1 6 0h1a3 3 0 0 1 0 6" stroke="#8c3a72" stroke-width="1.300"/><path d="M5.500 13h8a1.200 1.200 0 0 0 0-2.500h-3.500a2 2 0 1 0-3 0" stroke="#8c3a72" stroke-width="1"/></svg>
<svg style="left:1093.5px;top:555px" width="18" height="18" viewBox="0 0 18 18" fill="none"><path d="M3 3h5.500v5.500H3z" fill="#8c3a72"/><path d="M10 3h5.500v5.500H10zM3 10h5.500v5.500H3z" fill="#a8808f"/><path d="M10 10h5.500v5.500H10z" fill="#9a6a80"/></svg>
<svg style="left:1093.5px;top:577px" width="18" height="18" viewBox="0 0 18 18" fill="none"><path d="M9 2v14M2 9h14" stroke="#444" stroke-width="1.300"/><path d="M6.500 4.500L9 2l2.500 2.500M6.500 13.500L9 16l2.500-2.500M4.500 6.500L2 9l2.500 2.500M13.500 6.500L16 9l-2.500 2.500" stroke="#444" stroke-width="1.200"/></svg>
<svg style="left:1093.5px;top:599px" width="18" height="18" viewBox="0 0 18 18" fill="none"><path d="M13 5.500A5.500 5.500 0 1 0 14.500 11" stroke="#444" stroke-width="1.300"/><path d="M9.500 2l3.500 3.500L9.500 8" stroke="#444" stroke-width="1.200"/></svg>
<svg style="left:1093.5px;top:621px" width="18" height="18" viewBox="0 0 18 18" fill="none"><path d="M15.500 8V2.500h-12v12H9" stroke="#333" stroke-width="1.300"/><path d="M10.500 10.500h6v6h-6z" stroke="#333" stroke-width="1" stroke-dasharray="1.500 1"/><path d="M12 12l3 3M12 14v-2h2" stroke="#333"/></svg>
<svg style="left:259px;top:709px" width="18" height="18" viewBox="0 0 18 18" fill="none"><rect x="1.500" y="1.500" width="14" height="14" fill="#fff" stroke="#2b3340" stroke-width="1.300"/><path d="M6 1.500v14M11 1.500v14M1.500 6h14M1.500 11h14" stroke="#2b3340" stroke-width="1.600"/><path d="M15 4v12H3" stroke="#4a7fb5" stroke-width="2"/></svg>
<svg style="left:284px;top:709px" width="18" height="18" viewBox="0 0 18 18" fill="none"><rect x="1.500" y="1.500" width="15" height="15" fill="#fff" stroke="#2b3340" stroke-width="1.200"/><path d="M6.500 1.500v15M11.500 1.500v15M1.500 6.500h15M1.500 11.500h15" stroke="#4a7fb5" stroke-width="1.200"/></svg>
<svg style="left:308px;top:709px" width="18" height="18" viewBox="0 0 18 18" fill="none"><path d="M2.500 1.500v15h14" stroke="#2b3340" stroke-width="1.400"/><path d="M2.500 12.500h4v4" stroke="#4a7fb5" stroke-width="1.200"/></svg>
<div class="a" style="left:331px;top:709px;width:20px;height:18px;background:#f7f7f7;border:1px solid #a9a9a9"></div>
<svg style="left:332px;top:709px" width="18" height="18" viewBox="0 0 18 18" fill="none"><circle cx="8" cy="10" r="6" stroke="#2b3340" stroke-width="1.400"/><path d="M8 10L16.500 2M8 10h8.500" stroke="#4a7fb5" stroke-width="1.300"/></svg>
<div class="a" style="left:355px;top:709px;width:20px;height:18px;background:#f7f7f7;border:1px solid #a9a9a9"></div>
<svg style="left:356px;top:709px" width="18" height="18" viewBox="0 0 18 18" fill="none"><rect x="2.500" y="2.500" width="14" height="14" fill="#fff" stroke="#2b3340" stroke-width="1.500"/><rect x="1.500" y="1.500" width="4" height="4" fill="#fff" stroke="#e2623a" stroke-width="1.200"/></svg>
<div class="a" style="left:378.5px;top:709px;width:20px;height:18px;background:#f7f7f7;border:1px solid #a9a9a9"></div>
<svg style="left:379.5px;top:709px" width="18" height="18" viewBox="0 0 18 18" fill="none"><path d="M2 15.500h14.500M2 15.500L16 2.500" stroke="#2b3340" stroke-width="1.400"/><rect x="7.500" y="6.500" width="3.500" height="3.500" fill="#fff" stroke="#4a7fb5" stroke-width="1.200"/></svg>
<div class="a" style="left:403px;top:709px;width:20px;height:18px;background:#f7f7f7;border:1px solid #a9a9a9"></div>
<svg style="left:404px;top:709px" width="18" height="18" viewBox="0 0 18 18" fill="none"><path d="M6 2.500v10M1 7.500h10" stroke="#2b3340" stroke-width="1.700"/><rect x="8.500" y="12.500" width="8" height="3.500" fill="#dce8f7" stroke="#4a7fb5" stroke-width="1.200"/></svg>
<svg style="left:428px;top:709px" width="18" height="18" viewBox="0 0 18 18" fill="none"><path d="M2 4h14M2 9h14M2 14h14" stroke="#222" stroke-width="2.600"/></svg>
<div class="a" style="left:451px;top:709px;width:20px;height:18px;background:#f7f7f7;border:1px solid #a9a9a9"></div>
<svg style="left:452px;top:709px" width="18" height="18" viewBox="0 0 18 18" fill="none"><path d="M4.500 1.500v6M1.500 4.500h6" stroke="#2b3340" stroke-width="1.400"/><rect x="6.500" y="6.500" width="7" height="7" fill="#fff" stroke="#2b3340" stroke-width="1.200"/><rect x="9.500" y="9.500" width="7" height="7" fill="#fff" stroke="#4a7fb5" stroke-width="1.200"/></svg>
<div class="a" style="left:475px;top:709px;width:20px;height:18px;background:#f7f7f7;border:1px solid #a9a9a9"></div>
<svg style="left:476px;top:709px" width="18" height="18" viewBox="0 0 18 18" fill="none"><rect x="3.500" y="1.500" width="12" height="11" fill="#fff" stroke="#2b3340" stroke-width="1.200"/><path d="M7.500 1.500v11M11.500 1.500v11M3.500 5h12M3.500 9h12" stroke="#2b3340" stroke-width="1"/><rect x="1.500" y="5.500" width="9" height="8" fill="#a9c3e6" stroke="#2f5f92" stroke-width="1.200" stroke-dasharray="2 1"/><rect x="4" y="8" width="4" height="3.500" fill="#2f5f92"/><path d="M16.500 11v4.500h-6" stroke="#3d9a72" stroke-width="1.700"/><path d="M12.500 13l-2.500 2.500 2.500 2" stroke="#3d9a72" stroke-width="1.400"/></svg>
<div class="a" style="left:1263px;top:706px;width:21px;height:21px;background:#fff;border-left:1px solid #a9a9a9;border-top:1px solid #a9a9a9"></div>
<svg style="left:1265px;top:709px" width="18" height="18" viewBox="0 0 18 18" fill="none"><rect x="0" y="0" width="18" height="18" fill="#c9c2e8"/><path d="M4 12l3-7 3 7 2-4 2.500 2" stroke="#4a3f8a" stroke-width="1.400"/><circle cx="13.500" cy="5" r="1.500" stroke="#4a3f8a"/><circle cx="4" cy="13" r="1.200" fill="#4a3f8a"/></svg>
<svg style="left:1289.5px;top:709px" width="18" height="18" viewBox="0 0 18 18" fill="none"><rect x="7.800" y="2.500" width="2.400" height="3" fill="#3f7ec0" transform="rotate(0 9 9)"/><rect x="7.800" y="2.500" width="2.400" height="3" fill="#3f7ec0" transform="rotate(45 9 9)"/><rect x="7.800" y="2.500" width="2.400" height="3" fill="#3f7ec0" transform="rotate(90 9 9)"/><rect x="7.800" y="2.500" width="2.400" height="3" fill="#3f7ec0" transform="rotate(135 9 9)"/><rect x="7.800" y="2.500" width="2.400" height="3" fill="#3f7ec0" transform="rotate(180 9 9)"/><rect x="7.800" y="2.500" width="2.400" height="3" fill="#3f7ec0" transform="rotate(225 9 9)"/><rect x="7.800" y="2.500" width="2.400" height="3" fill="#3f7ec0" transform="rotate(270 9 9)"/><rect x="7.800" y="2.500" width="2.400" height="3" fill="#3f7ec0" transform="rotate(315 9 9)"/><circle cx="9" cy="9" r="3.800" fill="none" stroke="#3f7ec0" stroke-width="2.200"/></svg>
<svg style="left:1310px;top:717px" width="6" height="5" viewBox="0 0 6 5"><path d="M0.500 0.500h5L3 4z" fill="#111"/></svg>
<div class="a" style="left:1325px;top:708px;width:14px;height:19px;background:#f7f7f7;border:1px solid #9a9a9a"></div>
<svg style="left:1328px;top:714px" width="9" height="7" viewBox="0 0 9 7"><path d="M0.500 0.500h7L4 6z" fill="#1f8a3a"/></svg>
<svg style="left:1343px;top:709px" width="18" height="18" viewBox="0 0 18 18" fill="none"><path d="M2 6.500V2h4.500M11.500 2H16v4.500M16 11.500V16h-4.500M6.500 16H2v-4.500M2 2l4.500 4.500M16 2l-4.500 4.500M16 16l-4.500-4.500M2 16l4.500-4.500" stroke="#222" stroke-width="1.200"/></svg>
</body></html>
